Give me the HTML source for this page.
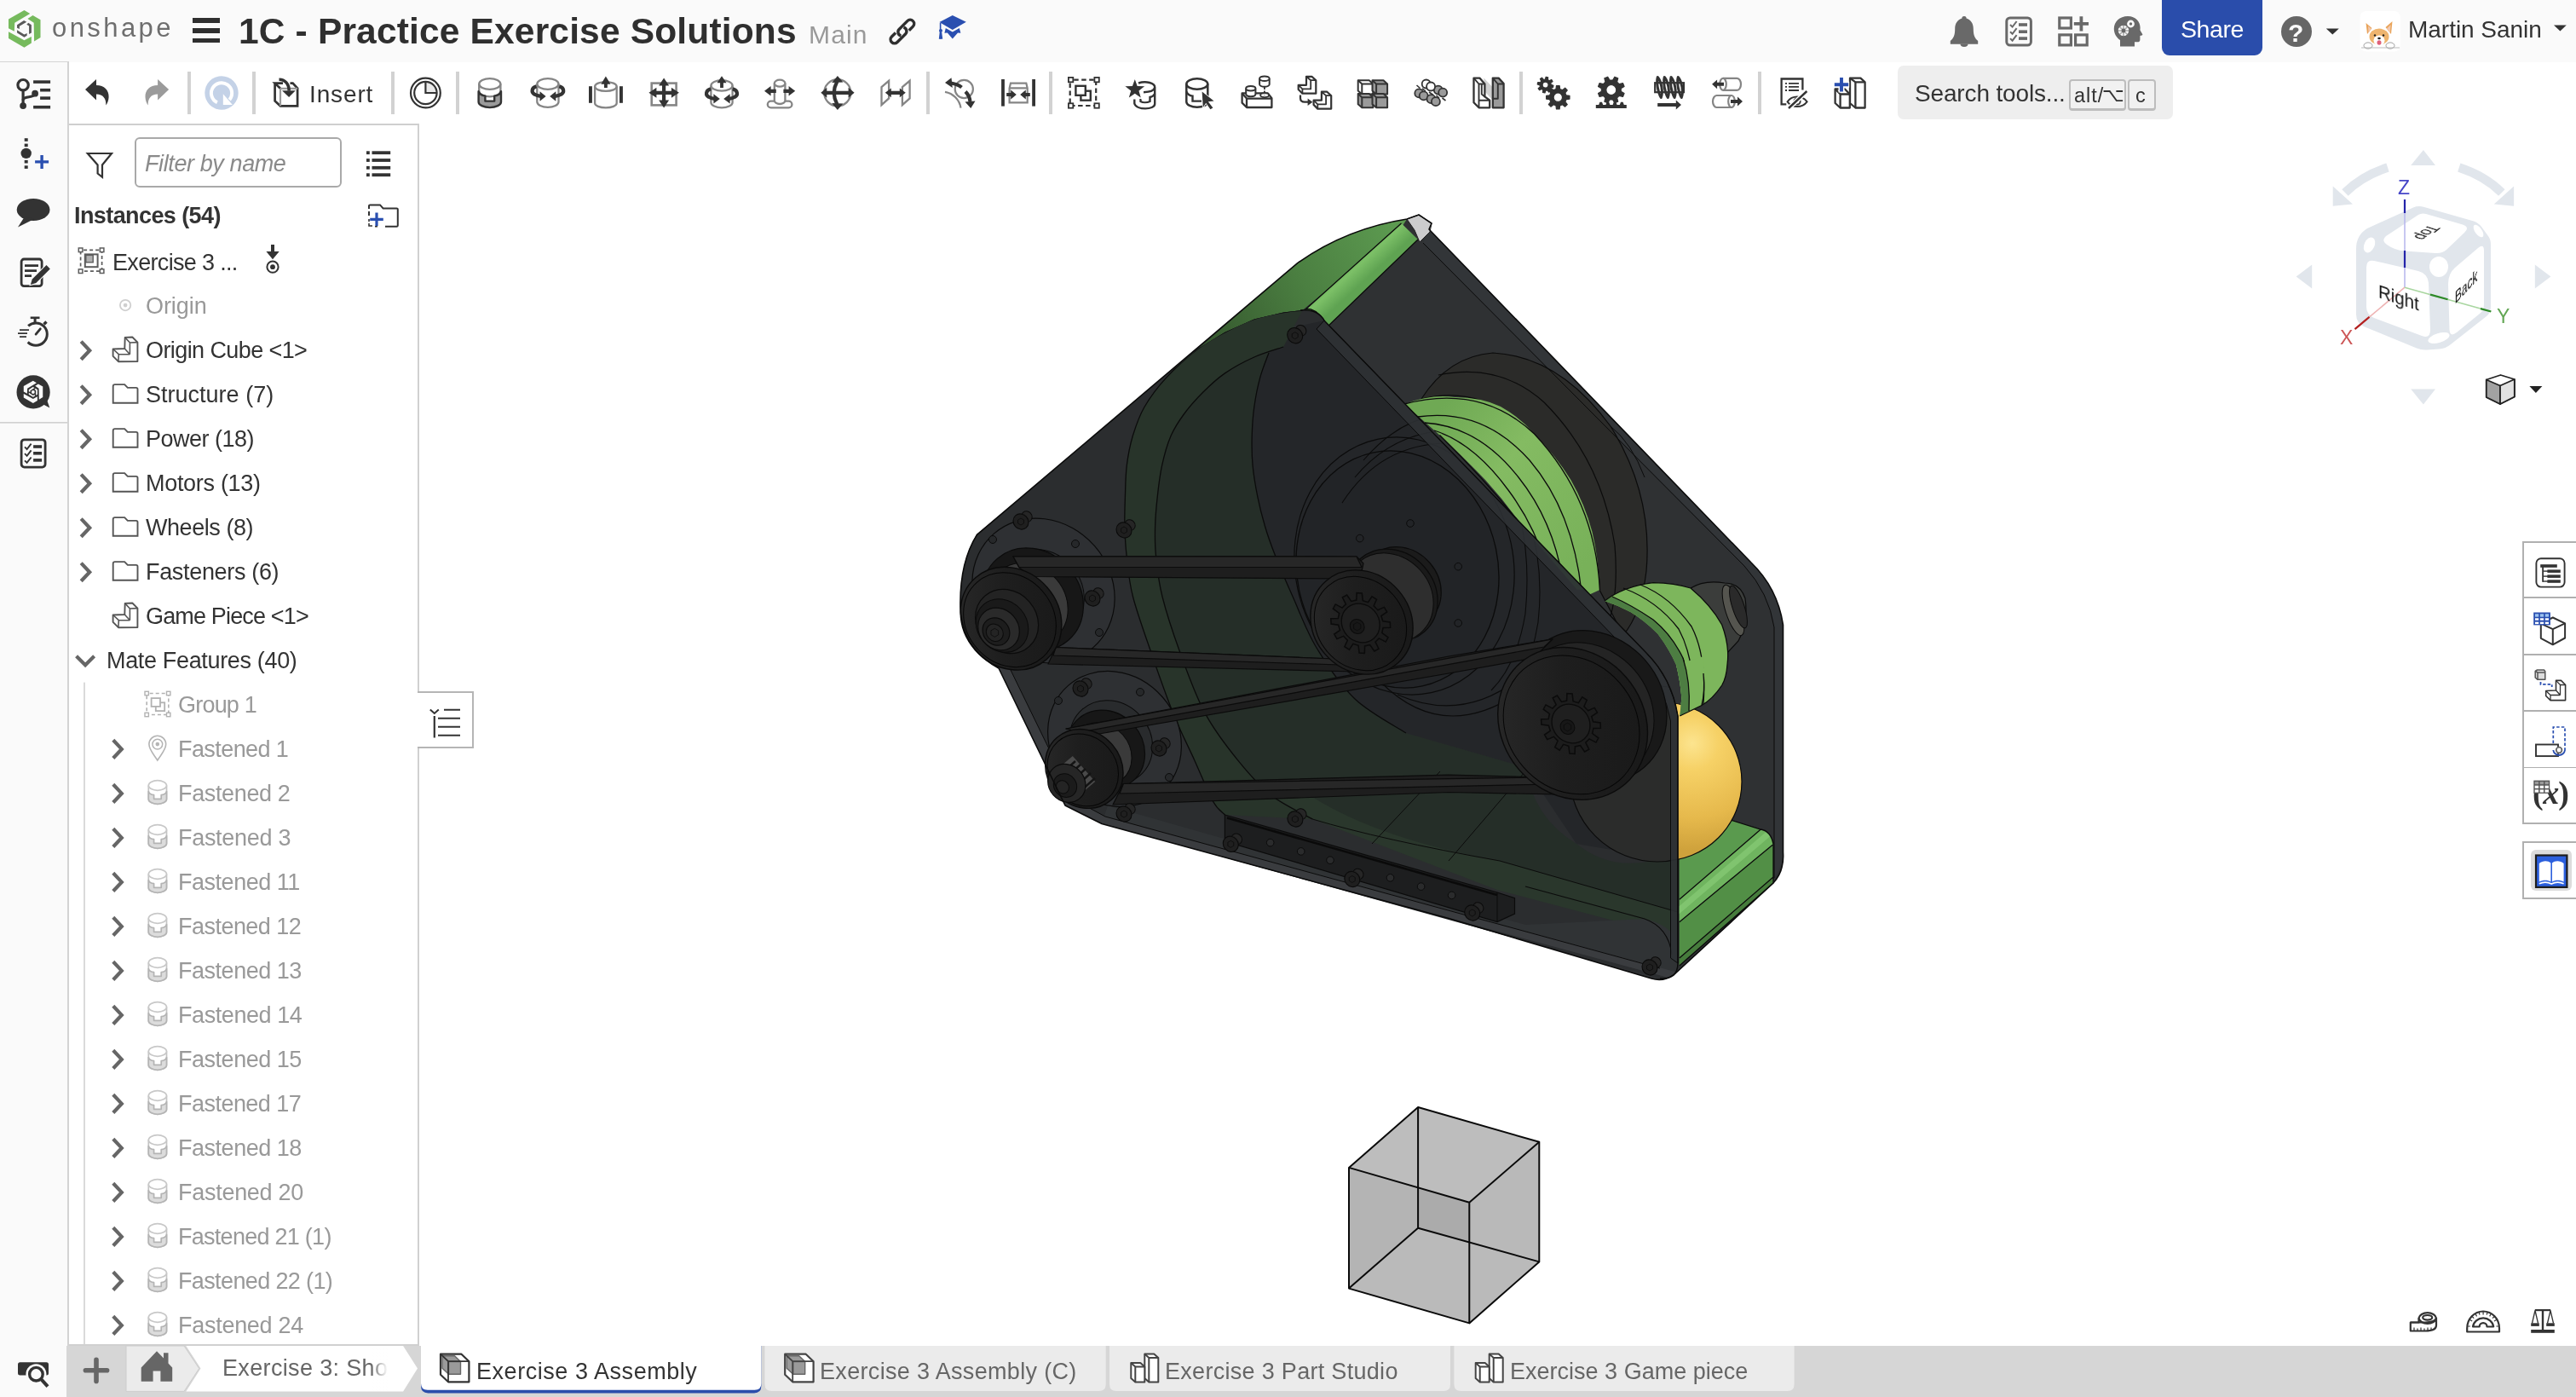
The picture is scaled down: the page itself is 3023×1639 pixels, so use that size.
<!DOCTYPE html>
<html lang="en">
<head>
<meta charset="utf-8">
<title>1C - Practice Exercise Solutions | Exercise 3 Assembly</title>
<style>
*{box-sizing:border-box;margin:0;padding:0}
html,body{width:3023px;height:1639px;overflow:hidden;background:#fff}
body{position:relative;font-family:"Liberation Sans",sans-serif;color:#333;font-size:27px}
.abs{position:absolute}
svg{position:absolute;overflow:visible}
.tx{position:absolute;white-space:nowrap;line-height:1;transform-origin:0 100%;will-change:transform}
#topbar{position:absolute;left:0;top:0;width:3023px;height:73px;background:#fafafa}
#sidebar{position:absolute;left:0;top:72px;width:81px;height:1567px;background:#fafafa;border-top:1px solid #d4d4d4;border-right:2px solid #d3d3d3}
#toolbar{position:absolute;left:81px;top:73px;width:2942px;height:73px;background:#fff}
#panel{position:absolute;left:80.500px;top:144.500px;width:411.500px;height:1434.500px;background:#fff;border-top:2px solid #cfcfcf;border-right:2px solid #d0d0d0;border-bottom:2px solid #d0d0d0}
#bottom{position:absolute;left:78px;top:1579px;width:2945px;height:60px;background:#d6d6d6}
.sep{position:absolute;top:84px;width:4px;height:50px;background:#d2d2d2}
.row{position:absolute;left:0;height:52px;width:408px}
</style>
</head>
<body>

<div id="topbar"></div>
<svg class="abs" style="left:0;top:0" width="60" height="72" viewBox="0 0 60 72">
<g fill="#76ba5d"><polygon points="28.460,12.010 35.270,16.020 17.230,26.850 16.830,36.870 10.010,33.270 10.010,22.440"/><polygon points="38.480,18.030 47.500,23.240 47.500,44.090 40.090,48.500 39.690,26.850 32.470,22.040"/><polygon points="10.010,37.270 28.460,47.300 36.880,42.890 36.880,50.500 28.460,55.720 10.010,44.890"/></g>
<g fill="#595959"><polygon points="28.060,24.040 31.270,25.650 22.850,30.860 22.850,34.070 20.040,32.860 20.040,29.260"/><polygon points="33.270,26.850 36.880,29.260 36.880,38.480 34.070,40.080 34.070,30.460 31.270,28.860"/><polygon points="20.040,35.270 28.460,40.480 31.670,38.880 31.670,41.690 28.460,43.690 20.040,38.480"/></g>
</svg>
<span class="tx" style="left:61.0px;top:17.0px;font-size:31.0px;color:#6e6e6e;letter-spacing:3.43px;">onshape</span>
<div class="abs" style="left:226px;top:21.2px;width:32px;height:5.4px;background:#2f2f2f"></div>
<div class="abs" style="left:226px;top:33.2px;width:32px;height:5.4px;background:#2f2f2f"></div>
<div class="abs" style="left:226px;top:45.1px;width:32px;height:5.4px;background:#2f2f2f"></div>
<span class="tx" style="left:279.7px;top:16.3px;font-size:42.5px;color:#2f2f2f;letter-spacing:0.16px;font-weight:bold;">1C - Practice Exercise Solutions</span>
<span class="tx" style="left:949.0px;top:26.3px;font-size:30.0px;color:#999;letter-spacing:1.16px;">Main</span>
<svg class="abs" style="left:1040px;top:18px" width="40" height="40" viewBox="1040 18 40 40" fill="none" stroke="#2f2f2f" stroke-width="3.400" stroke-linecap="butt">
<g transform="translate(1058.900 37.100) rotate(-45)"><path d="M6.500 4.600 H13 A4.600 4.600 0 0 0 13 -4.600 H-0.500 A4.600 4.600 0 0 0 -4.500 2.400"/><path d="M-6.500 -4.600 H-13 A4.600 4.600 0 0 0 -13 4.600 H0.500 A4.600 4.600 0 0 0 4.500 -2.400"/></g>
</svg>
<svg class="abs" style="left:1095px;top:12px" width="45" height="40" viewBox="1095 12 45 40">
<polygon points="1102.4,26 1117.8,18 1133.8,25.8 1117.8,35" fill="#2a4fb0"/>
<polygon points="1109.8,33 1117.8,37.6 1125.8,33 1127.4,38.8 1124,38.4 1117.8,45.4 1111.8,38.4 1108.4,38.8" fill="#2a4fb0"/>
<path d="M1103.6 27 V45.6" stroke="#2a4fb0" stroke-width="1.6" fill="none"/>
<polygon points="1102.8,38 1105.2,38 1106.2,45.8 1101.8,45.8" fill="#2a4fb0"/>
<circle cx="1104" cy="36" r="2" fill="#2a4fb0"/>
</svg>
<svg class="abs" style="left:2280px;top:10px" width="250" height="55" viewBox="2280 10 250 55">
<g fill="#696969">
<path d="M2305 19 c2 0 2.6 1.2 2.6 2.6 c5.2 1.6 8.2 6 8.2 12.4 c0 7.4 1.6 10.6 5.4 14 v3.8 h-32.4 v-3.8 c3.8 -3.400 5.4 -6.600 5.4 -14 c0 -6.400 3 -10.800 8.200 -12.400 c0 -1.400 0.600 -2.600 2.600 -2.600z"/>
<path d="M2300.500 51.500 h9 a4.500 3.400 0 0 1 -9 0z"/>
</g>
<rect x="2354.800" y="20.900" width="28.600" height="32.200" rx="4" fill="none" stroke="#696969" stroke-width="3"/>
<g fill="#696969"><rect x="2369" y="27.200" width="10" height="3.600"/><rect x="2369" y="35.400" width="10" height="3.600"/><rect x="2369" y="43.300" width="10" height="3.600"/></g>
<g fill="none" stroke="#696969" stroke-width="2"><path d="M2359 29 l2.600 2.600 l5 -6.600"/><path d="M2359 37.200 l2.600 2.600 l5 -6.600"/><path d="M2359 45.100 l2.600 2.600 l5 -6.600"/></g>
<g fill="none" stroke="#696969" stroke-width="3.200"><rect x="2416.800" y="21" width="13.600" height="12"/><rect x="2416.800" y="40.900" width="13.600" height="12"/><rect x="2435.600" y="40.900" width="13.600" height="12"/></g>
<path d="M2442.400 19.200 v17.200 M2433.800 27.800 h17.200" stroke="#696969" stroke-width="3.800" fill="none"/>
<path d="M2497 18.900 c9.500 0 14.600 6.600 14.600 13.600 c0 1.600 -.4 2.400 .2 3.400 l2.400 4 c.4 .8 0 1.400 -1 1.600 l-1.800 .4 v4.600 c0 2 -1.200 2.800 -3.200 2.800 h-3.200 v5.200 h-17 v-7.400 c-4.200 -3 -7.200 -7.600 -7.200 -13.400 c0 -8.400 6.600 -14.800 16.200 -14.800z" fill="#696969"/>
<g fill="#fafafa"><circle cx="2492" cy="36" r="6.200"/><circle cx="2500.500" cy="28" r="4.400"/></g>
<g fill="#696969"><circle cx="2492" cy="36" r="2.400"/><circle cx="2500.500" cy="28" r="1.700"/></g>
<g stroke="#696969" stroke-width="1.600"><path d="M2492 29 v14 M2485 36 h14 M2487 31 l10 10 M2497 31 l-10 10" opacity=".55"/></g>
</svg>
<div class="abs" style="left:2537px;top:-8px;width:118px;height:72.500px;border-radius:9px;background:#2a4dab"></div>
<span class="tx" style="left:2559.1px;top:20.1px;font-size:28.5px;color:#fff;letter-spacing:-0.41px;">Share</span>
<svg class="abs" style="left:2670px;top:10px" width="90" height="55" viewBox="2670 10 90 55">
<circle cx="2695" cy="37" r="18" fill="#666"/>
<polygon points="2729.800,33.500 2744.800,33.500 2737.300,40.600" fill="#333"/>
</svg>
<span class="tx" style="left:2684.6px;top:23.5px;font-size:30.0px;color:#fafafa;font-weight:bold;">?</span>
<svg class="abs" style="left:2765px;top:8px" width="60" height="60" viewBox="2765 8 60 60">
<rect x="2769.600" y="13" width="47.200" height="47.600" rx="7" fill="#fff"/>
<path d="M2778 40 l-1.500 -13 l7 6 z" fill="#e9a45a"/><path d="M2806 40 l1.500 -15 l-8 7 z" fill="#e9a45a"/>
<path d="M2779.500 38.500 l-.5 -8 l4 3.500z" fill="#f3c9b0"/><path d="M2804.800 38.500 l.8 -9.500 l-4.600 4.500z" fill="#f3c9b0"/>
<ellipse cx="2792" cy="43" rx="11.500" ry="9.500" fill="#eeb46e"/>
<ellipse cx="2792" cy="47.500" rx="6.500" ry="6" fill="#fff"/>
<ellipse cx="2792" cy="45" rx="1.800" ry="1.300" fill="#222"/>
<ellipse cx="2792" cy="50" rx="2.500" ry="2.800" fill="#e0607a"/>
<circle cx="2787" cy="41.500" r="1.200" fill="#222"/><circle cx="2797" cy="41.500" r="1.200" fill="#222"/>
<ellipse cx="2779" cy="53.500" rx="5" ry="3.600" fill="#fff" stroke="#888" stroke-width=".8"/><ellipse cx="2805" cy="53.500" rx="5" ry="3.600" fill="#fff" stroke="#888" stroke-width=".8"/>
<path d="M2771 56 h45" stroke="#aaa" stroke-width=".8"/>
</svg>
<span class="tx" style="left:2826.2px;top:20.5px;font-size:28.0px;color:#333;letter-spacing:-0.03px;">Martin Sanin</span>
<svg class="abs" style="left:2990px;top:25px" width="30" height="20" viewBox="2990 25 30 20"><polygon points="2997,29.500 3011.800,29.500 3004.400,36.500" fill="#333"/></svg>
<div id="toolbar"></div>
<div class="sep" style="left:220.2px"></div>
<div class="sep" style="left:296.1px"></div>
<div class="sep" style="left:459.2px"></div>
<div class="sep" style="left:535.0px"></div>
<div class="sep" style="left:1086.6px"></div>
<div class="sep" style="left:1231.3px"></div>
<div class="sep" style="left:1783.2px"></div>
<div class="sep" style="left:2063.2px"></div>
<svg class="abs" style="left:80px;top:73px" width="2943" height="73" viewBox="80 73 2943 73"><path d="M100 105 L113 93 V100 C122.5 100 128 106 127.6 114 C127.400 118 126.2 121 124.300 123.400 C124.800 116 121 110.600 113 110.600 V117.500 Z" fill="#333"/>
<g transform="translate(298.100 0) scale(-1 1)"><path d="M100 105 L113 93 V100 C122.5 100 128 106 127.6 114 C127.400 118 126.2 121 124.300 123.400 C124.800 116 121 110.600 113 110.600 V117.500 Z" fill="#9b9b9b"/></g>
<circle cx="260" cy="109" r="19.700" fill="#c4d2e7"/>
<path d="M254.900 120.300 A12.100 12.100 0 1 1 269.300 117.100" fill="none" stroke="#fff" stroke-width="4"/>
<polygon points="261.800,110.300 261.800,122.900 272.900,122.900" fill="#fff"/>
<g fill="none" stroke="#333" stroke-width="2.700" stroke-linejoin="miter"><path d="M322.600 97.600 V118.400 L329 124.300 H349.100 V103.500 L343.600 97.600 H340.500 M332 97.600 H322.600 L329 103.800" /><path d="M329 103.800 V124.300 M329 103.800 H349.100" stroke="#9a9a9a" stroke-width="2.200"/><path d="M327.500 93.200 C334.500 93.200 339.200 98.500 339.200 106.500" stroke-width="3.600"/></g>
<polygon points="331,106.200 346.800,106.200 339.100,113.900" fill="#333"/>
<path d="M499.400 109 V95.200 A13.800 13.800 0 0 1 513.200 109 Z" fill="#e9e9e9"/>
<g fill="none" stroke="#333" stroke-width="2.200"><circle cx="499.400" cy="109" r="17.400"/><circle cx="499.400" cy="109" r="13.200"/><path d="M499.400 95.800 V109 H512.600"/></g>
<g fill="none" stroke="#858585" stroke-width="2.3"><path d="M562.2 98.5 V107.0 A12.6 6.4 0 0 0 587.4 107.0 V98.5"/><ellipse cx="574.8" cy="98.5" rx="12.6" ry="6.4"/></g>
<path d="M561.600 107.200 C562.400 110 565.500 112.200 569.400 112.600 V118.600 H580.200 V112.600 C584.300 112.200 587.200 110 588 107.200 V119.500 A13.200 6.600 0 0 1 561.600 119.500 Z" fill="#9a9a9a" stroke="#333" stroke-width="2.400" stroke-linejoin="round"/>
<g fill="none" stroke="#858585" stroke-width="2.3"><path d="M630.3 98.5 V119.5 A12.6 6.4 0 0 0 655.5 119.5 V98.5"/><ellipse cx="642.9" cy="98.5" rx="12.6" ry="6.4"/></g>
<g><path d="M629.500 101.300 C623.500 103 623.200 108.500 627.500 110.800 C629.500 112 632 112.500 634.500 112.800" fill="none" stroke="#333" stroke-width="4.200"/><polygon points="633.500,107.200 640.600,112.900 633.500,118.700" fill="#333"/></g>
<g transform="translate(1285.8 0) scale(-1 1)"><path d="M629.500 101.300 C623.500 103 623.200 108.500 627.500 110.800 C629.500 112 632 112.500 634.500 112.800" fill="none" stroke="#333" stroke-width="4.200"/><polygon points="633.500,107.200 640.600,112.900 633.500,118.700" fill="#333"/></g>
<g fill="none" stroke="#858585" stroke-width="2.3"><path d="M698.1 101.5 V121.0 A12.8 5.4 0 0 0 723.7 121.0 V101.5"/><ellipse cx="710.9" cy="101.5" rx="12.8" ry="5.4"/></g>
<rect x="691" y="101.200" width="3.900" height="19.600" fill="#333"/><rect x="727" y="101.200" width="3.900" height="19.600" fill="#333"/>
<polygon points="712.80,103.00 712.80,98.80 716.50,98.80 710.90,89.40 705.30,98.80 709.00,98.80 709.00,103.00" fill="#333"/>
<rect x="764.700" y="97.600" width="28.900" height="25.800" fill="none" stroke="#858585" stroke-width="2.600"/>
<polygon points="761.40,108.80 770.40,114.80 770.40,110.90 787.90,110.90 787.90,114.80 796.90,108.80 787.90,102.80 787.90,106.70 770.40,106.70 770.40,102.80" fill="#333"/>
<polygon points="779.10,91.40 773.10,100.40 777.00,100.40 777.00,117.60 773.10,117.60 779.10,126.60 785.10,117.60 781.20,117.60 781.20,100.40 785.10,100.40" fill="#333"/>
<g fill="none" stroke="#858585" stroke-width="2.3"><path d="M834.4 100.4 V120.2 A12.6 6.2 0 0 0 859.6 120.2 V100.4"/><ellipse cx="847.0" cy="100.4" rx="12.6" ry="6.2"/></g>
<polygon points="848.90,103.00 848.90,97.20 852.60,97.20 847.00,89.20 841.40,97.20 845.10,97.20 845.10,103.00" fill="#333"/>
<g><path d="M834.200 104.300 C828 106 827.600 111.500 831.800 113.800 C833.800 115 836 115.600 838.500 115.900" fill="none" stroke="#333" stroke-width="4.200"/><polygon points="837.400,110.300 844.800,116 837.400,121.600" fill="#333"/></g>
<g transform="translate(1694.0 0) scale(-1 1)"><path d="M834.200 104.300 C828 106 827.600 111.500 831.800 113.800 C833.800 115 836 115.600 838.500 115.900" fill="none" stroke="#333" stroke-width="4.200"/><polygon points="837.400,110.300 844.800,116 837.400,121.600" fill="#333"/></g>
<rect x="900.800" y="118.600" width="28.600" height="7.800" rx="3.900" fill="none" stroke="#858585" stroke-width="2.300"/>
<path d="M908.800 97.700 V118 A6.300 4 0 0 0 921.400 118 V97.700" fill="#fff" stroke="#858585" stroke-width="2.300"/><ellipse cx="915.1" cy="97.700" rx="6.300" ry="4" fill="#fff" stroke="#858585" stroke-width="2.300"/>
<polygon points="910.80,104.70 904.60,104.70 904.60,101.00 897.00,106.80 904.60,112.60 904.60,108.90 910.80,108.90" fill="#333"/>
<polygon points="919.40,108.90 925.60,108.90 925.60,112.60 933.20,106.80 925.60,101.00 925.60,104.70 919.40,104.70" fill="#333"/>
<circle cx="982.8" cy="108.8" r="15.600" fill="none" stroke="#858585" stroke-width="2.300"/>
<polygon points="963.30,108.80 970.30,114.80 970.30,110.90 995.60,110.90 995.60,114.80 1002.60,108.80 995.60,102.80 995.60,106.70 970.30,106.70 970.30,102.80" fill="#333"/>
<path d="M982.400 95.500 C977.800 104 977.800 114 982.400 122.500" fill="none" stroke="#333" stroke-width="4.200"/>
<polygon points="976.200,97 982.900,89 989.400,96.600" fill="#333"/><polygon points="976.200,121 982.900,128.900 989.400,121.400" fill="#333"/>
<g fill="none" stroke="#858585" stroke-width="2.300"><polygon points="1034.500,102.200 1043.100,94.800 1043.100,115.400 1034.500,123.200"/><polygon points="1058.900,102.200 1067.600,94.800 1067.600,115.400 1058.900,123.200"/></g>
<polygon points="1038.80,108.80 1045.80,114.20 1045.80,110.90 1055.80,110.90 1055.80,114.20 1062.80,108.80 1055.80,103.40 1055.80,106.70 1045.80,106.70 1045.80,103.40" fill="#333"/>
<g fill="none" stroke="#858585" stroke-width="2.200"><circle cx="1131.300" cy="104.500" r="10.600"/><path d="M1109 107.800 A22.500 22.500 0 0 1 1127.500 126.700"/></g>
<path d="M1116 97.500 C1122 98.500 1125.500 100 1128.500 102.500 M1133 107.500 C1136.500 111 1138 114.500 1138.500 119" fill="none" stroke="#333" stroke-width="4.200"/>
<polygon points="1109,97 1116.500,91.200 1117.800,103" fill="#333"/><polygon points="1132.500,119.500 1144.500,118.500 1139.300,127" fill="#333"/>
<rect x="1175.100" y="93" width="3.800" height="31.600" fill="#333"/><rect x="1211.200" y="93" width="3.800" height="31.600" fill="#333"/>
<path d="M1184.600 103.400 L1186 97.600 H1204.300 L1205.700 103.400 V120.400 H1184.600 Z M1184.600 103.400 H1205.700" fill="none" stroke="#858585" stroke-width="2.200"/>
<polygon points="1181.20,113.00 1186.20,113.00 1186.20,116.40 1192.80,111.00 1186.20,105.60 1186.20,109.00 1181.20,109.00" fill="#333"/>
<polygon points="1208.80,109.00 1203.80,109.00 1203.80,105.60 1197.20,111.00 1203.80,116.40 1203.80,113.00 1208.80,113.00" fill="#333"/>
<rect x="1255.700" y="93.600" width="30.500" height="30.400" fill="none" stroke="#333" stroke-width="2.200" stroke-dasharray="5.500 3.500" stroke-dashoffset="-4.500"/>
<rect x="1253.9" y="90.9" width="5.400" height="5.400" fill="#fff" stroke="#333" stroke-width="1.800"/>
<rect x="1284.4" y="90.9" width="5.400" height="5.400" fill="#fff" stroke="#333" stroke-width="1.800"/>
<rect x="1253.9" y="121.3" width="5.400" height="5.400" fill="#fff" stroke="#333" stroke-width="1.800"/>
<rect x="1284.4" y="121.3" width="5.400" height="5.400" fill="#fff" stroke="#333" stroke-width="1.800"/>
<rect x="1268.400" y="106.700" width="11.400" height="11" fill="#fff" stroke="#333" stroke-width="2.400"/><rect x="1262.400" y="100.800" width="11.400" height="11" fill="#fff" stroke="#333" stroke-width="2.400"/>
<g fill="none" stroke="#333" stroke-width="2.400"><path d="M1336 97.500 C1345 94.500 1355.500 97.500 1355.200 102.500 V122 C1355.200 129 1333.500 129.500 1331.300 121.500 V116.500"/><path d="M1355.200 102.500 C1354.500 106 1349 108 1342 108.200"/><path d="M1355.200 110 C1354 112.500 1352 113.500 1349.500 114 V119 C1346 120.500 1341 120.500 1338.500 119 V116"/></g>
<polygon points="1331.80,91.30 1335.09,100.37 1344.73,100.70 1337.13,106.63 1339.79,115.90 1331.80,110.50 1323.81,115.90 1326.47,106.63 1318.87,100.70 1328.51,100.37" fill="#333" stroke="#fff" stroke-width="1.200"/>
<g fill="none" stroke="#333" stroke-width="2.5"><path d="M1392.3 98.5 V119.5 A12.5 6.3 0 0 0 1417.3 119.5 V98.5"/><ellipse cx="1404.8" cy="98.5" rx="12.5" ry="6.3"/></g>
<path d="M1392.300 107.500 C1393.500 110.500 1396 112.200 1399.500 112.600 V118.600 H1410" fill="none" stroke="#333" stroke-width="2.400"/>
<polygon points="1410.600,107.600 1424.600,118.400 1417.800,119.200 1423.400,126.400 1420.400,128.200 1415.200,120.800 1411.800,126" fill="#333" stroke="#fff" stroke-width="1.600" paint-order="stroke"/>
<g fill="#fff" stroke="#333" stroke-width="2.300" stroke-linejoin="round"><polygon points="1457.600,109.400 1487.800,109.400 1492.400,115.200 1492.400,126 1463,126 1457.600,120.600"/><path d="M1457.600 109.400 L1463 115.600 H1492.400 M1463 115.600 V126" fill="none"/></g>
<ellipse cx="1484.100" cy="111.600" rx="5" ry="2.500" fill="#fff" stroke="#333" stroke-width="1.800"/>
<g fill="#fff" stroke="#333" stroke-width="2"><path d="M1462.2 103.8 V110.6 A5.6 2.7 0 0 0 1473.4 110.6 V103.8"/><ellipse cx="1467.8" cy="103.8" rx="5.6" ry="2.7"/></g>
<g fill="#fff" stroke="#333" stroke-width="2"><path d="M1478.1 92.2 V99.0 A5.8 2.8 0 0 0 1489.7 99.0 V92.2"/><ellipse cx="1483.9" cy="92.2" rx="5.8" ry="2.8"/></g>
<path d="M1483.900 102 V111.500" stroke="#333" stroke-width="1.800" stroke-dasharray="3 1.500"/>
<g transform="translate(0.0 0.0)" stroke="#333" stroke-width="2.200" stroke-linejoin="round"><polygon points="1533,89.800 1539.400,89.800 1544.300,94.400 1544.300,109.700 1528.400,109.700 1523.700,105 1523.700,99.800 1533,99.800" fill="#fff"/><path d="M1523.700 99.800 L1528.400 104.400 H1538.200 V94.200 L1533 89.800 M1538.200 94.200 H1544.300 M1528.400 104.400 V109.700" fill="none" stroke-width="1.800"/></g>
<g transform="translate(17.9 17.9)" stroke="#333" stroke-width="2.200" stroke-linejoin="round"><polygon points="1533,89.800 1539.400,89.800 1544.300,94.400 1544.300,109.700 1528.400,109.700 1523.700,105 1523.700,99.800 1533,99.800" fill="#fff"/><path d="M1523.700 99.800 L1528.400 104.400 H1538.200 V94.200 L1533 89.800 M1538.200 94.200 H1544.300 M1528.400 104.400 V109.700" fill="none" stroke-width="1.800"/></g>
<path d="M1526 111.500 V115 C1526 118.500 1528 119.700 1531 119.700 H1535" fill="none" stroke="#333" stroke-width="2.200"/><polygon points="1534.600,115.400 1540.400,119.700 1534.600,124" fill="#333"/>
<g stroke="#333" stroke-width="2" stroke-linejoin="round" fill="#fff"><polygon points="1593.7,94.2 1606.7,94.2 1611.3,98.4 1611.3,110.4 1598.3,110.4 1593.7,106.4"/><path d="M1593.7 94.2 L1598.3 98.4 H1611.3 M1598.3 98.4 V110.4" fill="none"/></g>
<g stroke="#333" stroke-width="2" stroke-linejoin="round" fill="#9a9a9a"><polygon points="1610.5,94.2 1623.5,94.2 1628.1,98.4 1628.1,110.4 1615.1,110.4 1610.5,106.4"/><path d="M1610.5 94.2 L1615.1 98.4 H1628.1 M1615.1 98.4 V110.4" fill="none"/></g>
<g stroke="#333" stroke-width="2" stroke-linejoin="round" fill="#9a9a9a"><polygon points="1593.7,110.1 1606.7,110.1 1611.3,114.3 1611.3,126.3 1598.3,126.3 1593.7,122.3"/><path d="M1593.7 110.1 L1598.3 114.3 H1611.3 M1598.3 114.3 V126.3" fill="none"/></g>
<g stroke="#333" stroke-width="2" stroke-linejoin="round" fill="#9a9a9a"><polygon points="1610.5,110.1 1623.5,110.1 1628.1,114.3 1628.1,126.3 1615.1,126.3 1610.5,122.3"/><path d="M1610.5 110.1 L1615.1 114.3 H1628.1 M1615.1 114.3 V126.3" fill="none"/></g>
<g stroke="#333" stroke-width="1.800" fill="#9a9a9a"><circle cx="1665.3" cy="109.4" r="5"/><circle cx="1670.7" cy="112.4" r="5"/></g>
<g stroke="#333" stroke-width="1.800" fill="#9a9a9a"><circle cx="1679.5" cy="116.2" r="5"/><circle cx="1684.9" cy="119.2" r="5"/></g>
<g stroke="#333" stroke-width="1.800" fill="#9a9a9a"><circle cx="1687.8" cy="105.6" r="5"/><circle cx="1693.2" cy="108.6" r="5"/></g>
<g stroke="#333" stroke-width="1.800" fill="#fff"><circle cx="1673.7" cy="98.5" r="5"/><circle cx="1679.1" cy="101.5" r="5"/></g>
<path d="M1662.500 100 L1666.500 103.500 M1669 103.800 L1673 107 M1677 108 L1682 111.500 M1685.500 112 L1689 115 M1692.500 115 L1696.500 118" stroke="#333" stroke-width="1.600" fill="none"/>
<polygon points="1741.300,91.400 1751.100,101.700 1751.100,117 1741.300,106" fill="#d0d0d0"/>
<g stroke="#333" stroke-width="2.300" stroke-linejoin="round"><polygon points="1729.500,91.600 1736.400,91.600 1742.400,98.500 1742.400,113.400 1748.200,117.700 1748.200,126.300 1735.500,126.300 1729.500,120.200" fill="#fff"/><path d="M1729.500 91.600 L1735.500 98.500 H1742.400 M1735.500 98.500 V126.300 M1735.500 117.700 H1748.200 M1742.400 113.400 L1738.800 110.600 V98.500" fill="none" stroke-width="1.900"/></g>
<g stroke="#333" stroke-width="2.300" stroke-linejoin="round"><polygon points="1751.800,91.600 1758.700,91.600 1764.600,98 1764.600,126.300 1751.800,126.300 1751.800,115.500 1751.800,91.600" fill="#9a9a9a"/><path d="M1751.800 91.600 L1757.800 98.500 H1764.600 M1757.800 98.500 V115.800 H1751.800" fill="none" stroke-width="1.900"/></g>
<path fill-rule="evenodd" fill="#333" d="M1820.20,99.36 L1822.98,100.22 L1822.48,102.68 L1819.58,102.39 L1818.43,104.10 L1819.79,106.67 L1817.70,108.06 L1815.86,105.80 L1813.84,106.20 L1812.98,108.98 L1810.52,108.48 L1810.81,105.58 L1809.10,104.43 L1806.53,105.79 L1805.14,103.70 L1807.40,101.86 L1807.00,99.84 L1804.22,98.98 L1804.72,96.52 L1807.62,96.81 L1808.77,95.10 L1807.41,92.53 L1809.50,91.14 L1811.34,93.40 L1813.36,93.00 L1814.22,90.22 L1816.68,90.72 L1816.39,93.62 L1818.10,94.77 L1820.67,93.41 L1822.06,95.50 L1819.80,97.34 Z M1810.10 99.60 a3.50 3.50 0 1 0 7.00 0 a3.50 3.50 0 1 0 -7.00 0Z" stroke="#333" stroke-width="1.2" stroke-linejoin="round"/>
<path fill-rule="evenodd" fill="#333" d="M1838.02,111.87 L1841.98,112.36 L1841.98,116.04 L1838.02,116.53 L1836.83,119.42 L1839.27,122.57 L1836.67,125.17 L1833.52,122.73 L1830.63,123.92 L1830.14,127.88 L1826.46,127.88 L1825.97,123.92 L1823.08,122.73 L1819.93,125.17 L1817.33,122.57 L1819.77,119.42 L1818.58,116.53 L1814.62,116.04 L1814.62,112.36 L1818.58,111.87 L1819.77,108.98 L1817.33,105.83 L1819.93,103.23 L1823.08,105.67 L1825.97,104.48 L1826.46,100.52 L1830.14,100.52 L1830.63,104.48 L1833.52,105.67 L1836.67,103.23 L1839.27,105.83 L1836.83,108.98 Z M1823.10 114.20 a5.20 5.20 0 1 0 10.40 0 a5.20 5.20 0 1 0 -10.40 0Z" stroke="#333" stroke-width="1.2" stroke-linejoin="round"/>
<path fill-rule="evenodd" fill="#333" d="M1902.26,107.31 L1906.07,109.55 L1904.46,113.44 L1900.18,112.32 L1897.62,114.88 L1898.74,119.16 L1894.85,120.77 L1892.61,116.96 L1888.99,116.96 L1886.75,120.77 L1882.86,119.16 L1883.98,114.88 L1881.42,112.32 L1877.14,113.44 L1875.53,109.55 L1879.34,107.31 L1879.34,103.69 L1875.53,101.45 L1877.14,97.56 L1881.42,98.68 L1883.98,96.12 L1882.86,91.84 L1886.75,90.23 L1888.99,94.04 L1892.61,94.04 L1894.85,90.23 L1898.74,91.84 L1897.62,96.12 L1900.18,98.68 L1904.46,97.56 L1906.07,101.45 L1902.26,103.69 Z M1884.80 105.50 a6.00 6.00 0 1 0 12.00 0 a6.00 6.00 0 1 0 -12.00 0Z" stroke="#333" stroke-width="1.2" stroke-linejoin="round"/>
<path d="M1872.800 127 V123 H1876.200 L1877.400 119.800 H1880 L1881.200 123 H1884.400 L1885.600 119.800 H1888.200 L1889.400 123 H1892.600 L1893.800 119.800 H1896.400 L1897.600 123 H1900.800 L1902 119.800 H1904.600 L1905.800 123 H1908.800 V127 Z" fill="#333"/>
<rect x="1942.200" y="97.200" width="33.800" height="11" fill="#fff" stroke="#333" stroke-width="2.200"/>
<path d="M1945.3 90.500 C1943.8 96 1945.3 108 1949.3 114.500 C1951.8 108 1949.8 96 1945.3 90.500 Z" fill="none" stroke="#333" stroke-width="3" stroke-linejoin="round"/>
<path d="M1953.3 90.500 C1951.8 96 1953.3 108 1957.3 114.500 C1959.8 108 1957.8 96 1953.3 90.500 Z" fill="none" stroke="#333" stroke-width="3" stroke-linejoin="round"/>
<path d="M1961.1 90.500 C1959.6 96 1961.1 108 1965.1 114.500 C1967.6 108 1965.6 96 1961.1 90.500 Z" fill="none" stroke="#333" stroke-width="3" stroke-linejoin="round"/>
<path d="M1969.3 90.500 C1967.8 96 1969.3 108 1973.3 114.500 C1975.8 108 1973.8 96 1969.3 90.500 Z" fill="none" stroke="#333" stroke-width="3" stroke-linejoin="round"/>
<polygon points="1945.20,124.90 1966.80,124.90 1966.80,128.40 1973.00,123.00 1966.80,117.60 1966.80,121.10 1945.20,121.10" fill="#333"/>
<g fill="#fff" stroke="#858585" stroke-width="2.200"><path d="M2022 91.800 H2038.500 A4.500 7 0 0 1 2038.500 105.800 H2022"/><ellipse cx="2022" cy="98.800" rx="3.800" ry="7"/><path d="M2032 112 H2014.500 A4.500 7 0 0 0 2014.500 126 H2032"/><ellipse cx="2032" cy="119" rx="3.800" ry="7"/></g>
<polygon points="2023.00,96.80 2015.10,96.80 2015.10,93.40 2009.10,98.80 2015.10,104.20 2015.10,100.80 2023.00,100.80" fill="#333"/>
<polygon points="2031.00,121.00 2039.00,121.00 2039.00,124.40 2045.00,119.00 2039.00,113.60 2039.00,117.00 2031.00,117.00" fill="#333"/>
<g fill="none" stroke="#333" stroke-width="2.300"><path d="M2096.300 122.300 H2090.600 V92.500 H2115.400 V105.500"/><path d="M2099 97.800 H2111 M2099 101.800 H2111 M2099 106 H2111" stroke-width="1.800"/><path d="M2095 97.800 H2097 M2095 101.800 H2097 M2095 106 H2097" stroke-width="1.800"/><path d="M2097.600 119.400 C2103 111.500 2115 111.500 2120.600 119.400 C2115 127 2103 127 2097.600 119.400 Z" stroke-width="2"/><circle cx="2109" cy="119" r="3.600" stroke-width="2"/></g>
<path d="M2099.600 126.600 L2120.200 107.200" stroke="#fff" stroke-width="5.500"/><path d="M2099 127 L2120.400 107" stroke="#333" stroke-width="2.400"/>
<g fill="#fff" stroke="#333" stroke-width="2.300" stroke-linejoin="round"><polygon points="2171,91.600 2183.400,91.600 2188.600,96.400 2188.600,126.500 2177.400,126.500 2171,121"/><path d="M2171 91.600 L2177.400 96.400 H2188.600 M2177.400 96.400 V126.500" fill="none"/><polygon points="2153.600,104.500 2153.600,121 2159.600,126.500 2170.800,126.500 2170.800,110.500 2165,104.500"/><path d="M2153.600 104.500 L2159.600 110.500 H2170.800 M2159.600 110.500 V126.500" fill="none"/></g>
<path d="M2161 90 V108.400 M2151.800 99.200 H2170.200" stroke="#fff" stroke-width="7"/><path d="M2161 91 V107.400 M2152.800 99.200 H2169.200" stroke="#2a4fb0" stroke-width="3.900"/></svg>
<span class="tx" style="left:363.2px;top:97.2px;font-size:28.0px;color:#333;letter-spacing:0.87px;">Insert</span>
<div class="abs" style="left:2226.700px;top:77px;width:323px;height:63.400px;border-radius:7px;background:#eeeeee"></div>
<span class="tx" style="left:2246.7px;top:96.2px;font-size:28.0px;color:#333;letter-spacing:-0.15px;">Search tools...</span>
<div class="abs" style="left:2428.300px;top:92.500px;width:67px;height:37.500px;border:2px solid #bdbdbd;border-bottom-width:3.500px;border-radius:4px;background:#f1f1f1"></div>
<div class="abs" style="left:2497px;top:92.500px;width:33px;height:37.500px;border:2px solid #bdbdbd;border-bottom-width:3.500px;border-radius:4px;background:#f1f1f1"></div>
<span class="tx" style="left:2433.5px;top:101.2px;font-size:23.5px;color:#333;letter-spacing:0.94px;">alt/</span>
<span class="tx" style="left:2466.500px;top:99.500px;font-size:22.500px;color:#333;font-family:'DejaVu Sans','Liberation Sans',sans-serif">⌥</span>
<span class="tx" style="left:2506.0px;top:101.2px;font-size:23.5px;color:#333;">c</span>

<div id="sidebar"></div>
<svg class="abs" style="left:0;top:0" width="80" height="1639" viewBox="0 0 80 1639"><g fill="none" stroke="#333" stroke-width="3.2"><circle cx="27.1" cy="99.7" r="6.2"/><path d="M27.1 106 V122"/><path d="M27.1 117.500 C27.1 112.500 40 115 40.800 110.500"/></g>
<circle cx="27.1" cy="124.100" r="3.900" fill="#333"/><circle cx="41.100" cy="109.700" r="3.900" fill="#333"/>
<rect x="39.1" y="94.3" width="20.0" height="3.600" fill="#333"/>
<rect x="47.1" y="103.9" width="12.0" height="3.600" fill="#333"/>
<rect x="47.1" y="113.3" width="12.0" height="3.600" fill="#333"/>
<rect x="39.1" y="123.9" width="20.0" height="3.600" fill="#333"/>
<rect x="28.700" y="162.2" width="4" height="3.600" fill="#333"/>
<rect x="28.700" y="168.6" width="4" height="3.600" fill="#333"/>
<rect x="28.700" y="187.9" width="4" height="3.600" fill="#333"/>
<rect x="28.700" y="194.3" width="4" height="3.600" fill="#333"/>
<circle cx="30.700" cy="179.900" r="6.200" fill="#333"/>
<path d="M49.100 181.900 V197.900 M41.100 189.900 H57.100" stroke="#2a4fb0" stroke-width="3.400"/>
<ellipse cx="39.100" cy="246" rx="19.400" ry="13" fill="#333"/><polygon points="29,254 21,266.600 40,257" fill="#333"/>
<rect x="25.100" y="304" width="24" height="31.600" rx="3" fill="none" stroke="#333" stroke-width="2.800"/>
<path d="M29 311.600 H45 M29 317.600 H43 M29 323.600 H37" stroke="#333" stroke-width="2.600"/>
<path d="M54.500 311 L37.800 327.500 L35.800 334 L42.300 332 L58.800 315.500 Z" fill="#333" stroke="#fafafa" stroke-width="2" paint-order="stroke"/>
<g fill="none" stroke="#333"><circle cx="42.100" cy="392.100" r="13.200" stroke-width="3" stroke-dasharray="62 21" stroke-dashoffset="-52"/><path d="M35.700 372.800 H46.500" stroke-width="2.600"/><path d="M41.100 373 V379" stroke-width="3"/><path d="M51.500 380.500 L54.500 377.500" stroke-width="3.400"/><path d="M42.100 392.100 L47.300 385.800" stroke-width="2.800" stroke-linecap="round"/><path d="M23 387.100 H34 M21 391.100 H32 M23 395.100 H31" stroke-width="1.800"/></g>
<circle cx="39.100" cy="459.900" r="19.600" fill="#333"/><polygon points="48,473 58.300,478.500 54,466" fill="#333"/>
<g transform="translate(39.100 459.900) scale(0.600) translate(-28.900 -33.800)" fill="#fafafa"><polygon points="28.460,12.010 35.270,16.020 17.230,26.850 16.830,36.870 10.010,33.270 10.010,22.440"/><polygon points="38.480,18.030 47.500,23.240 47.500,44.090 40.090,48.500 39.690,26.850 32.470,22.040"/><polygon points="10.010,37.270 28.460,47.300 36.880,42.890 36.880,50.500 28.460,55.720 10.010,44.890"/><polygon points="28.060,24.040 31.270,25.650 22.850,30.860 22.850,34.070 20.040,32.860 20.040,29.260"/><polygon points="33.270,26.850 36.880,29.260 36.880,38.480 34.070,40.080 34.070,30.460 31.270,28.860"/><polygon points="20.040,35.270 28.460,40.480 31.670,38.880 31.670,41.690 28.460,43.690 20.040,38.480"/><circle cx="28.500" cy="34" r="3.200"/></g>
<rect x="0" y="495" width="79" height="1.600" fill="#d0d0d0"/>
<rect x="25.100" y="515.800" width="28" height="32.300" rx="3.500" fill="none" stroke="#333" stroke-width="2.800"/>
<rect x="39.100" y="522.2" width="10" height="3.600" fill="#333"/><path d="M29 524.4 l2.600 2.600 l5 -6.400" fill="none" stroke="#333" stroke-width="1.900"/>
<rect x="39.100" y="530.0" width="10" height="3.600" fill="#333"/><path d="M29 532.2 l2.600 2.600 l5 -6.400" fill="none" stroke="#333" stroke-width="1.900"/>
<rect x="39.100" y="538.1" width="10" height="3.600" fill="#333"/><path d="M29 540.3 l2.600 2.600 l5 -6.400" fill="none" stroke="#333" stroke-width="1.900"/>
<rect x="21" y="1598.200" width="36" height="15.300" rx="2.500" fill="#333"/>
<circle cx="42.400" cy="1612.200" r="12" fill="#fafafa"/><circle cx="42.400" cy="1612.200" r="7.800" fill="#fafafa" stroke="#333" stroke-width="3.400"/><path d="M48.300 1618.200 L56 1626.600" stroke="#333" stroke-width="4"/></svg>
<div id="panel"></div>
<svg class="abs" style="left:80px;top:146px" width="412" height="1433" viewBox="80 146 412 1433"><path d="M102.800 180 H131 L120 193.500 V207.800 L114.600 203.500 V193.500 Z" fill="none" stroke="#333" stroke-width="2.200" stroke-linejoin="miter"/>
<rect x="430" y="177.3" width="3.800" height="3.800" fill="#333"/><rect x="436.500" y="177.3" width="21.700" height="3.800" fill="#333"/>
<rect x="430" y="186.1" width="3.800" height="3.800" fill="#333"/><rect x="436.500" y="186.1" width="21.700" height="3.800" fill="#333"/>
<rect x="430" y="194.9" width="3.800" height="3.800" fill="#333"/><rect x="436.500" y="194.9" width="21.700" height="3.800" fill="#333"/>
<rect x="430" y="203.3" width="3.800" height="3.800" fill="#333"/><rect x="436.500" y="203.3" width="21.700" height="3.800" fill="#333"/>
<path d="M433 253 V248 M433 245 V241.500 Q433 240.400 434.200 240.400 H446 L449.600 244.400 H465.500 Q466.800 244.400 466.800 245.600 V264.500 Q466.800 265.800 465.500 265.800 H452" fill="none" stroke="#333" stroke-width="2"/>
<path d="M433 257 V260 M433 262 V265 H437 M440 265.800 H443" fill="none" stroke="#333" stroke-width="1.600"/>
<path d="M442 249.500 V265 M434.200 257.300 H449.800" stroke="#2a4fb0" stroke-width="3.200"/>
<rect x="94.600" y="293.400" width="25" height="24.800" fill="none" stroke="#5c5c5c" stroke-width="1.700" stroke-dasharray="4 3" stroke-dashoffset="-3.500"/>
<rect x="92.3" y="291.0" width="4.600" height="4.600" fill="#fff" stroke="#5c5c5c" stroke-width="1.500"/>
<rect x="117.3" y="291.0" width="4.600" height="4.600" fill="#fff" stroke="#5c5c5c" stroke-width="1.500"/>
<rect x="92.3" y="315.9" width="4.600" height="4.600" fill="#fff" stroke="#5c5c5c" stroke-width="1.500"/>
<rect x="117.3" y="315.9" width="4.600" height="4.600" fill="#fff" stroke="#5c5c5c" stroke-width="1.500"/>
<rect x="99.800" y="298.400" width="14.800" height="14.800" fill="#fff" stroke="#5c5c5c" stroke-width="2"/><rect x="100.800" y="299.400" width="8.400" height="8.400" fill="#b0b0b0" stroke="#5c5c5c" stroke-width="1.400"/>
<polygon points="318,287.100 322,287.100 322,295 327.700,295 320,304.200 312.400,295 318,295" fill="#333"/>
<circle cx="320" cy="313.200" r="6.600" fill="none" stroke="#333" stroke-width="2"/><circle cx="320" cy="313.200" r="2.900" fill="#333"/>
<circle cx="147.100" cy="358.100" r="6.200" fill="none" stroke="#cfcfcf" stroke-width="1.800"/><circle cx="147.100" cy="358.100" r="2.400" fill="#cfcfcf"/>
<path d="M95.2 400.6 L105.2 411.2 L95.2 421.8" fill="none" stroke="#666" stroke-width="4.200" stroke-linecap="butt" stroke-linejoin="miter"/>
<g transform="translate(0 0.0)" fill="none" stroke="#555" stroke-width="1.900" stroke-linejoin="round"><polygon points="146.700,395.900 155.300,395.500 161.400,401.600 161.400,424 138.900,424.200 132.600,417.800 132.600,409.500 146.300,409" fill="#fff"/><path d="M146.700 395.900 L152.400 402 L161.400 401.600 M152.400 402 V415.700 M132.600 409.500 L139.300 415.700 H152.400 M139.300 415.700 L138.900 424.200 M146.300 409 L152.400 415.700" stroke-width="1.600"/></g>
<path d="M95.2 452.6 L105.2 463.2 L95.2 473.8" fill="none" stroke="#666" stroke-width="4.200" stroke-linecap="butt" stroke-linejoin="miter"/>
<path transform="translate(0 0.0)" d="M132.700 472.700 V453.200 Q132.700 451.100 134.800 451.100 H146.200 L149.800 454.900 H159.700 Q161.500 454.900 161.500 456.700 V472.700 Z" fill="none" stroke="#555" stroke-width="1.900"/>
<path d="M95.2 504.6 L105.2 515.2 L95.2 525.8" fill="none" stroke="#666" stroke-width="4.200" stroke-linecap="butt" stroke-linejoin="miter"/>
<path transform="translate(0 52.0)" d="M132.700 472.700 V453.200 Q132.700 451.100 134.800 451.100 H146.200 L149.800 454.900 H159.700 Q161.500 454.900 161.500 456.700 V472.700 Z" fill="none" stroke="#555" stroke-width="1.900"/>
<path d="M95.2 556.6 L105.2 567.2 L95.2 577.8" fill="none" stroke="#666" stroke-width="4.200" stroke-linecap="butt" stroke-linejoin="miter"/>
<path transform="translate(0 104.0)" d="M132.700 472.700 V453.200 Q132.700 451.100 134.800 451.100 H146.200 L149.800 454.900 H159.700 Q161.500 454.900 161.500 456.700 V472.700 Z" fill="none" stroke="#555" stroke-width="1.900"/>
<path d="M95.2 608.6 L105.2 619.2 L95.2 629.8" fill="none" stroke="#666" stroke-width="4.200" stroke-linecap="butt" stroke-linejoin="miter"/>
<path transform="translate(0 156.0)" d="M132.700 472.700 V453.200 Q132.700 451.100 134.800 451.100 H146.200 L149.800 454.900 H159.700 Q161.500 454.900 161.500 456.700 V472.700 Z" fill="none" stroke="#555" stroke-width="1.900"/>
<path d="M95.2 660.6 L105.2 671.2 L95.2 681.8" fill="none" stroke="#666" stroke-width="4.200" stroke-linecap="butt" stroke-linejoin="miter"/>
<path transform="translate(0 208.0)" d="M132.700 472.700 V453.200 Q132.700 451.100 134.800 451.100 H146.200 L149.800 454.900 H159.700 Q161.500 454.900 161.500 456.700 V472.700 Z" fill="none" stroke="#555" stroke-width="1.900"/>
<g transform="translate(0 312.0)" fill="none" stroke="#555" stroke-width="1.900" stroke-linejoin="round"><polygon points="146.700,395.900 155.300,395.500 161.400,401.600 161.400,424 138.900,424.200 132.600,417.800 132.600,409.500 146.300,409" fill="#fff"/><path d="M146.700 395.900 L152.400 402 L161.400 401.600 M152.400 402 V415.700 M132.600 409.500 L139.300 415.700 H152.400 M139.300 415.700 L138.900 424.200 M146.300 409 L152.400 415.700" stroke-width="1.600"/></g>
<path d="M89.600 769.800 L100.100 780.300 L110.600 769.800" fill="none" stroke="#666" stroke-width="4.200"/>
<rect x="98.200" y="800.600" width="1.600" height="778" fill="#d2d2d2"/>
<rect x="172.200" y="813.500" width="25.600" height="25" fill="none" stroke="#b2b2b2" stroke-width="1.600" stroke-dasharray="4 3" stroke-dashoffset="-3.500"/>
<rect x="170.0" y="811.3" width="4.400" height="4.400" fill="#fff" stroke="#b2b2b2" stroke-width="1.400"/>
<rect x="195.5" y="811.3" width="4.400" height="4.400" fill="#fff" stroke="#b2b2b2" stroke-width="1.400"/>
<rect x="170.0" y="836.3" width="4.400" height="4.400" fill="#fff" stroke="#b2b2b2" stroke-width="1.400"/>
<rect x="195.5" y="836.3" width="4.400" height="4.400" fill="#fff" stroke="#b2b2b2" stroke-width="1.400"/>
<rect x="182.800" y="824.300" width="10.400" height="9.800" fill="#fff" stroke="#b2b2b2" stroke-width="1.800"/><rect x="177.600" y="819.100" width="10.400" height="9.800" fill="#fff" stroke="#b2b2b2" stroke-width="1.800"/>
<path d="M184.800 892 C180 884.500 174.900 879.500 174.900 873.100 A9.900 9.900 0 0 1 194.700 873.100 C194.700 879.500 189.600 884.500 184.800 892 Z" fill="#fff" stroke="#b4b4b4" stroke-width="1.600"/><circle cx="184.800" cy="873.100" r="5.900" fill="none" stroke="#b4b4b4" stroke-width="1.500"/><circle cx="184.800" cy="873.100" r="2.300" fill="#b4b4b4"/>
<path d="M132.8 868.3 L142.8 878.9 L132.8 889.5" fill="none" stroke="#666" stroke-width="4.200" stroke-linecap="butt" stroke-linejoin="miter"/>
<path d="M132.8 920.3 L142.8 930.9 L132.8 941.5" fill="none" stroke="#666" stroke-width="4.200" stroke-linecap="butt" stroke-linejoin="miter"/>
<g transform="translate(0 0.0)"><path d="M174.300 921.500 V937.500 A10.600 5.800 0 0 0 195.500 937.500 V921.500" fill="#fff" stroke="#c4c4c4" stroke-width="1.700"/><path d="M174.300 928.500 C175 930.800 177.500 932.400 180.600 932.700 V937.300 H189.200 V932.700 C192.300 932.400 194.800 930.800 195.500 928.500 V937.500 A10.600 5.800 0 0 1 174.300 937.500 Z" fill="#dcdcdc" stroke="#b4b4b4" stroke-width="1.700" stroke-linejoin="round"/><ellipse cx="184.900" cy="921.500" rx="10.600" ry="5.800" fill="#fff" stroke="#c8c8c8" stroke-width="1.700"/></g>
<path d="M132.8 972.3 L142.8 982.9 L132.8 993.5" fill="none" stroke="#666" stroke-width="4.200" stroke-linecap="butt" stroke-linejoin="miter"/>
<g transform="translate(0 52.0)"><path d="M174.300 921.500 V937.500 A10.600 5.800 0 0 0 195.500 937.500 V921.500" fill="#fff" stroke="#c4c4c4" stroke-width="1.700"/><path d="M174.300 928.500 C175 930.800 177.500 932.400 180.600 932.700 V937.300 H189.200 V932.700 C192.300 932.400 194.800 930.800 195.500 928.500 V937.500 A10.600 5.800 0 0 1 174.300 937.500 Z" fill="#dcdcdc" stroke="#b4b4b4" stroke-width="1.700" stroke-linejoin="round"/><ellipse cx="184.900" cy="921.500" rx="10.600" ry="5.800" fill="#fff" stroke="#c8c8c8" stroke-width="1.700"/></g>
<path d="M132.8 1024.3 L142.8 1034.9 L132.8 1045.5" fill="none" stroke="#666" stroke-width="4.200" stroke-linecap="butt" stroke-linejoin="miter"/>
<g transform="translate(0 104.0)"><path d="M174.300 921.500 V937.500 A10.600 5.800 0 0 0 195.500 937.500 V921.500" fill="#fff" stroke="#c4c4c4" stroke-width="1.700"/><path d="M174.300 928.500 C175 930.800 177.500 932.400 180.600 932.700 V937.300 H189.200 V932.700 C192.300 932.400 194.800 930.800 195.500 928.500 V937.500 A10.600 5.800 0 0 1 174.300 937.500 Z" fill="#dcdcdc" stroke="#b4b4b4" stroke-width="1.700" stroke-linejoin="round"/><ellipse cx="184.900" cy="921.500" rx="10.600" ry="5.800" fill="#fff" stroke="#c8c8c8" stroke-width="1.700"/></g>
<path d="M132.8 1076.3 L142.8 1086.9 L132.8 1097.5" fill="none" stroke="#666" stroke-width="4.200" stroke-linecap="butt" stroke-linejoin="miter"/>
<g transform="translate(0 156.0)"><path d="M174.300 921.500 V937.500 A10.600 5.800 0 0 0 195.500 937.500 V921.500" fill="#fff" stroke="#c4c4c4" stroke-width="1.700"/><path d="M174.300 928.500 C175 930.800 177.500 932.400 180.600 932.700 V937.300 H189.200 V932.700 C192.300 932.400 194.800 930.800 195.500 928.500 V937.500 A10.600 5.800 0 0 1 174.300 937.500 Z" fill="#dcdcdc" stroke="#b4b4b4" stroke-width="1.700" stroke-linejoin="round"/><ellipse cx="184.900" cy="921.500" rx="10.600" ry="5.800" fill="#fff" stroke="#c8c8c8" stroke-width="1.700"/></g>
<path d="M132.8 1128.3 L142.8 1138.9 L132.8 1149.5" fill="none" stroke="#666" stroke-width="4.200" stroke-linecap="butt" stroke-linejoin="miter"/>
<g transform="translate(0 208.0)"><path d="M174.300 921.500 V937.500 A10.600 5.800 0 0 0 195.500 937.500 V921.500" fill="#fff" stroke="#c4c4c4" stroke-width="1.700"/><path d="M174.300 928.500 C175 930.800 177.500 932.400 180.600 932.700 V937.300 H189.200 V932.700 C192.300 932.400 194.800 930.800 195.500 928.500 V937.500 A10.600 5.800 0 0 1 174.300 937.500 Z" fill="#dcdcdc" stroke="#b4b4b4" stroke-width="1.700" stroke-linejoin="round"/><ellipse cx="184.900" cy="921.500" rx="10.600" ry="5.800" fill="#fff" stroke="#c8c8c8" stroke-width="1.700"/></g>
<path d="M132.8 1180.3 L142.8 1190.9 L132.8 1201.5" fill="none" stroke="#666" stroke-width="4.200" stroke-linecap="butt" stroke-linejoin="miter"/>
<g transform="translate(0 260.0)"><path d="M174.300 921.500 V937.500 A10.600 5.800 0 0 0 195.500 937.500 V921.500" fill="#fff" stroke="#c4c4c4" stroke-width="1.700"/><path d="M174.300 928.500 C175 930.800 177.500 932.400 180.600 932.700 V937.300 H189.200 V932.700 C192.300 932.400 194.800 930.800 195.500 928.500 V937.500 A10.600 5.800 0 0 1 174.300 937.500 Z" fill="#dcdcdc" stroke="#b4b4b4" stroke-width="1.700" stroke-linejoin="round"/><ellipse cx="184.900" cy="921.500" rx="10.600" ry="5.800" fill="#fff" stroke="#c8c8c8" stroke-width="1.700"/></g>
<path d="M132.8 1232.3 L142.8 1242.9 L132.8 1253.5" fill="none" stroke="#666" stroke-width="4.200" stroke-linecap="butt" stroke-linejoin="miter"/>
<g transform="translate(0 312.0)"><path d="M174.300 921.500 V937.500 A10.600 5.800 0 0 0 195.500 937.500 V921.500" fill="#fff" stroke="#c4c4c4" stroke-width="1.700"/><path d="M174.300 928.500 C175 930.800 177.500 932.400 180.600 932.700 V937.300 H189.200 V932.700 C192.300 932.400 194.800 930.800 195.500 928.500 V937.500 A10.600 5.800 0 0 1 174.300 937.500 Z" fill="#dcdcdc" stroke="#b4b4b4" stroke-width="1.700" stroke-linejoin="round"/><ellipse cx="184.900" cy="921.500" rx="10.600" ry="5.800" fill="#fff" stroke="#c8c8c8" stroke-width="1.700"/></g>
<path d="M132.8 1284.3 L142.8 1294.9 L132.8 1305.5" fill="none" stroke="#666" stroke-width="4.200" stroke-linecap="butt" stroke-linejoin="miter"/>
<g transform="translate(0 364.0)"><path d="M174.300 921.500 V937.500 A10.600 5.800 0 0 0 195.500 937.500 V921.500" fill="#fff" stroke="#c4c4c4" stroke-width="1.700"/><path d="M174.300 928.500 C175 930.800 177.500 932.400 180.600 932.700 V937.300 H189.200 V932.700 C192.300 932.400 194.800 930.800 195.500 928.500 V937.500 A10.600 5.800 0 0 1 174.300 937.500 Z" fill="#dcdcdc" stroke="#b4b4b4" stroke-width="1.700" stroke-linejoin="round"/><ellipse cx="184.900" cy="921.500" rx="10.600" ry="5.800" fill="#fff" stroke="#c8c8c8" stroke-width="1.700"/></g>
<path d="M132.8 1336.3 L142.8 1346.9 L132.8 1357.5" fill="none" stroke="#666" stroke-width="4.200" stroke-linecap="butt" stroke-linejoin="miter"/>
<g transform="translate(0 416.0)"><path d="M174.300 921.500 V937.500 A10.600 5.800 0 0 0 195.500 937.500 V921.500" fill="#fff" stroke="#c4c4c4" stroke-width="1.700"/><path d="M174.300 928.500 C175 930.800 177.500 932.400 180.600 932.700 V937.300 H189.200 V932.700 C192.300 932.400 194.800 930.800 195.500 928.500 V937.500 A10.600 5.800 0 0 1 174.300 937.500 Z" fill="#dcdcdc" stroke="#b4b4b4" stroke-width="1.700" stroke-linejoin="round"/><ellipse cx="184.900" cy="921.500" rx="10.600" ry="5.800" fill="#fff" stroke="#c8c8c8" stroke-width="1.700"/></g>
<path d="M132.8 1388.3 L142.8 1398.9 L132.8 1409.5" fill="none" stroke="#666" stroke-width="4.200" stroke-linecap="butt" stroke-linejoin="miter"/>
<g transform="translate(0 468.0)"><path d="M174.300 921.500 V937.500 A10.600 5.800 0 0 0 195.500 937.500 V921.500" fill="#fff" stroke="#c4c4c4" stroke-width="1.700"/><path d="M174.300 928.500 C175 930.800 177.500 932.400 180.600 932.700 V937.300 H189.200 V932.700 C192.300 932.400 194.800 930.800 195.500 928.500 V937.500 A10.600 5.800 0 0 1 174.300 937.500 Z" fill="#dcdcdc" stroke="#b4b4b4" stroke-width="1.700" stroke-linejoin="round"/><ellipse cx="184.900" cy="921.500" rx="10.600" ry="5.800" fill="#fff" stroke="#c8c8c8" stroke-width="1.700"/></g>
<path d="M132.8 1440.3 L142.8 1450.9 L132.8 1461.5" fill="none" stroke="#666" stroke-width="4.200" stroke-linecap="butt" stroke-linejoin="miter"/>
<g transform="translate(0 520.0)"><path d="M174.300 921.500 V937.500 A10.600 5.800 0 0 0 195.500 937.500 V921.500" fill="#fff" stroke="#c4c4c4" stroke-width="1.700"/><path d="M174.300 928.500 C175 930.800 177.500 932.400 180.600 932.700 V937.300 H189.200 V932.700 C192.300 932.400 194.800 930.800 195.500 928.500 V937.500 A10.600 5.800 0 0 1 174.300 937.500 Z" fill="#dcdcdc" stroke="#b4b4b4" stroke-width="1.700" stroke-linejoin="round"/><ellipse cx="184.900" cy="921.500" rx="10.600" ry="5.800" fill="#fff" stroke="#c8c8c8" stroke-width="1.700"/></g>
<path d="M132.8 1492.3 L142.8 1502.9 L132.8 1513.5" fill="none" stroke="#666" stroke-width="4.200" stroke-linecap="butt" stroke-linejoin="miter"/>
<g transform="translate(0 572.0)"><path d="M174.300 921.500 V937.500 A10.600 5.800 0 0 0 195.500 937.500 V921.500" fill="#fff" stroke="#c4c4c4" stroke-width="1.700"/><path d="M174.300 928.500 C175 930.800 177.500 932.400 180.600 932.700 V937.300 H189.200 V932.700 C192.300 932.400 194.800 930.800 195.500 928.500 V937.500 A10.600 5.800 0 0 1 174.300 937.500 Z" fill="#dcdcdc" stroke="#b4b4b4" stroke-width="1.700" stroke-linejoin="round"/><ellipse cx="184.900" cy="921.500" rx="10.600" ry="5.800" fill="#fff" stroke="#c8c8c8" stroke-width="1.700"/></g>
<path d="M132.8 1544.3 L142.8 1554.9 L132.8 1565.5" fill="none" stroke="#666" stroke-width="4.200" stroke-linecap="butt" stroke-linejoin="miter"/>
<g transform="translate(0 624.0)"><path d="M174.300 921.500 V937.500 A10.600 5.800 0 0 0 195.500 937.500 V921.500" fill="#fff" stroke="#c4c4c4" stroke-width="1.700"/><path d="M174.300 928.500 C175 930.800 177.500 932.400 180.600 932.700 V937.300 H189.200 V932.700 C192.300 932.400 194.800 930.800 195.500 928.500 V937.500 A10.600 5.800 0 0 1 174.300 937.500 Z" fill="#dcdcdc" stroke="#b4b4b4" stroke-width="1.700" stroke-linejoin="round"/><ellipse cx="184.900" cy="921.500" rx="10.600" ry="5.800" fill="#fff" stroke="#c8c8c8" stroke-width="1.700"/></g></svg>
<div class="abs" style="left:158.400px;top:161.400px;width:242.700px;height:58.600px;border:2px solid #a9a9a9;border-radius:6px;background:#fff"></div>
<span class="tx" style="left:169.7px;top:179.2px;font-size:27.0px;color:#8a8a8a;letter-spacing:-0.40px;font-style:italic;">Filter by name</span>
<span class="tx" style="left:87.2px;top:240.4px;font-size:27.0px;color:#333;letter-spacing:-0.59px;font-weight:bold;">Instances (54)</span>
<span class="tx" style="left:131.5px;top:294.5px;font-size:27.0px;color:#333;letter-spacing:-0.67px;">Exercise 3 ...</span>
<span class="tx" style="left:171.2px;top:346.2px;font-size:27.0px;color:#999;letter-spacing:-0.07px;">Origin</span>
<span class="tx" style="left:125.1px;top:762.2px;font-size:27.0px;color:#333;letter-spacing:-0.34px;">Mate Features (40)</span>
<span class="tx" style="left:209.2px;top:813.9px;font-size:27.0px;color:#999;letter-spacing:-0.79px;">Group 1</span>
<span class="tx" style="left:171.0px;top:398.4px;font-size:27.0px;color:#333;letter-spacing:-0.59px;">Origin Cube &lt;1&gt;</span>
<span class="tx" style="left:171.0px;top:450.4px;font-size:27.0px;color:#333;letter-spacing:0.01px;">Structure (7)</span>
<span class="tx" style="left:171.0px;top:502.4px;font-size:27.0px;color:#333;letter-spacing:-0.52px;">Power (18)</span>
<span class="tx" style="left:171.0px;top:554.4px;font-size:27.0px;color:#333;letter-spacing:-0.30px;">Motors (13)</span>
<span class="tx" style="left:171.0px;top:606.4px;font-size:27.0px;color:#333;letter-spacing:-0.45px;">Wheels (8)</span>
<span class="tx" style="left:171.0px;top:658.4px;font-size:27.0px;color:#333;letter-spacing:-0.33px;">Fasteners (6)</span>
<span class="tx" style="left:171.0px;top:710.4px;font-size:27.0px;color:#333;letter-spacing:-0.84px;">Game Piece &lt;1&gt;</span>
<span class="tx" style="left:209.2px;top:866.2px;font-size:27.0px;color:#999;letter-spacing:-0.58px;">Fastened 1</span>
<span class="tx" style="left:209.2px;top:918.2px;font-size:27.0px;color:#999;letter-spacing:-0.36px;">Fastened 2</span>
<span class="tx" style="left:209.2px;top:970.2px;font-size:27.0px;color:#999;letter-spacing:-0.30px;">Fastened 3</span>
<span class="tx" style="left:209.2px;top:1022.2px;font-size:27.0px;color:#999;letter-spacing:-0.48px;">Fastened 11</span>
<span class="tx" style="left:209.2px;top:1074.2px;font-size:27.0px;color:#999;letter-spacing:-0.53px;">Fastened 12</span>
<span class="tx" style="left:209.2px;top:1126.2px;font-size:27.0px;color:#999;letter-spacing:-0.48px;">Fastened 13</span>
<span class="tx" style="left:209.2px;top:1178.2px;font-size:27.0px;color:#999;letter-spacing:-0.43px;">Fastened 14</span>
<span class="tx" style="left:209.2px;top:1230.2px;font-size:27.0px;color:#999;letter-spacing:-0.48px;">Fastened 15</span>
<span class="tx" style="left:209.2px;top:1282.2px;font-size:27.0px;color:#999;letter-spacing:-0.53px;">Fastened 17</span>
<span class="tx" style="left:209.2px;top:1334.2px;font-size:27.0px;color:#999;letter-spacing:-0.48px;">Fastened 18</span>
<span class="tx" style="left:209.2px;top:1386.2px;font-size:27.0px;color:#999;letter-spacing:-0.28px;">Fastened 20</span>
<span class="tx" style="left:209.2px;top:1438.2px;font-size:27.0px;color:#999;letter-spacing:-0.73px;">Fastened 21 (1)</span>
<span class="tx" style="left:209.2px;top:1490.2px;font-size:27.0px;color:#999;letter-spacing:-0.63px;">Fastened 22 (1)</span>
<span class="tx" style="left:209.2px;top:1542.2px;font-size:27.0px;color:#999;letter-spacing:-0.28px;">Fastened 24</span>
<div class="abs" style="left:490px;top:811px;width:66px;height:67px;border:2px solid #b5b5b5;border-left:none;background:#fff"></div>
<svg class="abs" style="left:495px;top:820px" width="60" height="55" viewBox="495 820 60 55"><path d="M504.800 832.500 L509.800 837 L514.800 832.500" fill="none" stroke="#333" stroke-width="2"/><path d="M509.800 840 V865.500" stroke="#333" stroke-width="2.200"/><path d="M521 832.800 H540 M514 842.800 H540 M514 852.800 H540 M514 862.800 H540" stroke="#333" stroke-width="2"/></svg>
<svg class="abs" style="left:1100px;top:230px" width="1020" height="1350" viewBox="1100 230 1020 1350"><defs>
<radialGradient id="gBall" cx="1986" cy="872" r="125" gradientUnits="userSpaceOnUse"><stop offset="0" stop-color="#fce48f"/><stop offset=".25" stop-color="#f6d166"/><stop offset=".7" stop-color="#e6b94c"/><stop offset="1" stop-color="#cfa23c"/></radialGradient>
<linearGradient id="gHood" x1="1420" y1="400" x2="1640" y2="270" gradientUnits="userSpaceOnUse"><stop offset="0" stop-color="#36592f"/><stop offset=".5" stop-color="#4b7f41"/><stop offset="1" stop-color="#5c9a50"/></linearGradient>
<linearGradient id="gRoll" x1="1585" y1="300" x2="1607" y2="324" gradientUnits="userSpaceOnUse"><stop offset="0" stop-color="#5a9a4e"/><stop offset=".45" stop-color="#7cc067"/><stop offset="1" stop-color="#5fa352"/></linearGradient>
<linearGradient id="gWheel" x1="1690" y1="480" x2="1880" y2="640" gradientUnits="userSpaceOnUse"><stop offset="0" stop-color="#6fa954"/><stop offset=".4" stop-color="#84bb62"/><stop offset="1" stop-color="#78b159"/></linearGradient>
<linearGradient id="gPul" x1="0" y1="0" x2="1" y2="1"><stop offset="0" stop-color="#2b2b2b"/><stop offset=".45" stop-color="#1e1e1e"/><stop offset="1" stop-color="#181818"/></linearGradient>
<linearGradient id="gBody" x1="0" y1="0" x2="1" y2="1"><stop offset="0" stop-color="#3d3d3d"/><stop offset=".5" stop-color="#2a2a2a"/><stop offset="1" stop-color="#1b1b1b"/></linearGradient>
<clipPath id="cFront"><path d="M1146 627 L1406.500 408.700 L1437.500 389.800 L1471.800 374.400 L1506.200 366.600 L1528.500 364 Q1546 362 1554 376 L1932 766 Q1962 796 1969 840 V1130 Q1969 1149 1948 1148 L1293 966 L1250 945 L1172 784 Q1128 760 1127 712 Q1126 660 1146 627 Z"/></clipPath>
</defs>
<path d="M1651 257 L1665 252 L1680 262 L1677 269 L2055 660 Q2086 690 2092.500 733 V1000 Q2094 1022 2081 1036 L1964 1144 Q1952 1152 1938 1148 L1700 1077.500 L1293 966.500 L1250 945 L1172 784 Q1128 760 1127 712 Q1126 660 1146.500 627.400 L1522.400 308.800 Q1580 268 1651 257 Z" fill="#2f3133"/>
<path d="M1677 269 L2055 660 Q2086 690 2092.500 733 V1000 Q2093 1015 2082 1030 V736 Q2076 696 2047 664 L1670 285 Z" fill="#323538"/>
<path d="M1668 468 Q1700 418 1752 414 Q1830 418 1890 500 Q1940 580 1932 670 Q1926 720 1905 745 L1877 692 Q1876 600 1800 509 Q1740 450 1668 468 Z" fill="#2b2b29" stroke="#0b0b0b" stroke-width="1.200"/>
<path d="M1688 440 Q1760 425 1812 472 Q1880 540 1895 640 Q1900 700 1886 735" fill="none" stroke="#0b0b0b" stroke-width="1.200"/>
<path d="M1890 500 Q1915 520 1930 560 M1860 700 Q1880 740 1878 770" fill="none" stroke="#0b0b0b" stroke-width="1"/>
<path d="M1406.500 408.700 L1522.400 308.800 Q1580 268 1651 257 L1644 268 L1528.500 364 L1506.200 366.600 L1471.800 374.400 L1437.500 389.800 Z" fill="url(#gHood)"/>
<path d="M1644.500 262 L1664 281 L1556 385 L1531 364 Z" fill="url(#gRoll)"/>
<path d="M1644.500 262 L1531 364 M1664 281 L1556 385" stroke="#0b0b0b" stroke-width="1.300" fill="none"/>
<ellipse cx="1543.0" cy="375.0" rx="8.0" ry="16.5" transform="rotate(-47 1543.0 375.0)" fill="#5f9e52" stroke="#0b0b0b" stroke-width="1.2"/>
<path d="M1651 257 L1665 252 L1680 262 L1678 272 L1666 284 L1660 270 Z" fill="#f4f4f4" fill-opacity=".8" stroke="#222" stroke-width="1"/>
<path d="M1648 474 Q1680 462 1707 466 Q1738 466 1761 477 Q1784 490 1800.500 509 Q1826 535 1843.400 563 Q1860 592 1868.500 624 Q1876 655 1877.400 692 L1860 700 L1850.600 691.800 Q1838 682 1822 670 Q1804 643 1786 616.600 Q1766 588 1743 563 Q1716 535 1689.500 510.500 Z" fill="url(#gWheel)"/>
<g fill="none" stroke="#0b0b0b" stroke-width="1.300"><path d="M1648 474 Q1738 450 1800.500 509 Q1872 585 1877.400 692"/><path d="M1664 489 Q1740 478 1795 540 Q1846 600 1856 695"/><path d="M1672 496 Q1735 500 1782 560 Q1822 610 1834 680"/><path d="M1683 505 Q1730 520 1770 575 Q1800 615 1815 665"/><path d="M1689.500 510.500 Q1743 563 1786 616.600 L1850.600 691.800"/></g>
<path d="M1984 690 Q2000 680 2024 684 Q2042 684 2048 702 Q2052 730 2040 752 L2027 766 Z" fill="#3b3d3b" stroke="#0b0b0b" stroke-width="1.200"/>
<ellipse cx="2034.0" cy="716.0" rx="9.0" ry="31.0" transform="rotate(-18 2034.0 716.0)" fill="#55554f" stroke="#0b0b0b" stroke-width="1"/>
<ellipse cx="2040.0" cy="712.0" rx="7.0" ry="26.0" transform="rotate(-18 2040.0 712.0)" fill="#2a2a2a" stroke="#0b0b0b" stroke-width="1"/>
<path d="M1883 705 Q1905 688 1940 683.600 Q1965 684 1984 690 Q2008 710 2020.700 733 Q2030 758 2027 780 Q2026 795 2020.700 804 Q2010 820 1997 827.500 L1971.300 840 L1973.400 819 Q1972 800 1967 780 Q1958 760 1945.500 743.700 Q1930 728 1913.300 718 Q1898 710 1883 705 Z" fill="#7db65c"/>
<path d="M1883 705 Q1898 710 1913.300 718 Q1930 728 1945.500 743.700 Q1958 760 1967 780 Q1972 800 1973.400 819 L1971.300 840 L1982 834 Q1984 800 1975 772 Q1962 745 1940 727 Q1915 710 1892 700 Z" fill="#4d7d42"/>
<g fill="none" stroke="#0b0b0b" stroke-width="1.300"><path d="M1883 705 Q1905 688 1940 683.600 Q1965 684 1984 690 Q2008 710 2020.700 733 Q2030 758 2027 780 Q2026 795 2020.700 804 Q2010 820 1997 827.500"/><path d="M1925 686 Q1960 700 1985 735 Q2003 770 1999 826"/><path d="M1905 690 Q1945 705 1970 738 Q1990 775 1986 832"/><path d="M1892 700 Q1915 710 1940 727 Q1962 745 1975 772 Q1984 800 1982 834"/></g>
<path d="M1970.800 1000 L2031.700 962.300 L2066.300 973 Q2078 975 2081 990 V1036 L1970.800 1133 Z" fill="#528f46"/>
<path d="M1970.800 1000 L2031.700 962.300 L2066.300 973 L1970.800 1055.300 Z" fill="#5a9a4e"/>
<path d="M1970.800 1055.300 L2066.300 973 Q2078 975 2080.200 991.200 L1970.800 1081.700 Z" fill="#6fb45f"/>
<path d="M1970.800 1063 L2072 976.500 L2077.500 981 L1970.800 1072 Z" fill="#84c873" opacity=".8"/>
<path d="M1970.800 1124 L2081 1029 V1036 L1970.800 1133 Z" fill="#467c3c"/>
<path d="M2031.700 962.300 L2066.300 973 Q2078 975 2081 990 V1036 L1970.800 1133 M2066.300 973 L1970.800 1055.300 M2080.200 991.200 L1970.800 1081.700 M2081 1029 L1970.800 1124" fill="none" stroke="#0b0b0b" stroke-width="1.300"/>
<circle cx="1951" cy="917" r="93" fill="url(#gBall)" stroke="#0b0b0b" stroke-width="1.200"/>
<path d="M1967 780 L1999 770 Q2002 800 1997 827.500 L1971.300 840 L1973.400 819 Q1972 800 1967 780 Z" fill="#7db65c"/>
<path d="M1967 780 Q1972 800 1973.400 819 L1971.300 840 L1982 834 Q1984 800 1975 772 Z" fill="#4d7d42"/>
<path d="M1999 790 Q2001 812 1997 827.500 L1971.300 840 M1982 834 Q1984 800 1975 772" fill="none" stroke="#0b0b0b" stroke-width="1.300"/>
<g clip-path="url(#cFront)">
<rect x="1100" y="250" width="900" height="920" fill="#2b2d2f"/>
<path d="M1506.2 407.0 C1500.5 409.0 1483.2 413.9 1471.8 419.0 C1460.3 424.1 1447.5 431.0 1437.5 437.9 C1427.5 444.8 1419.7 452.3 1411.7 460.3 C1403.7 468.3 1395.6 477.4 1389.3 486.0 C1383.0 494.6 1378.2 501.8 1373.9 511.8 C1369.6 521.8 1366.2 534.3 1363.6 546.2 C1361.0 558.1 1359.5 571.2 1358.2 583.1 C1356.9 595.0 1355.9 606.0 1355.6 617.5 C1355.3 629.0 1355.1 638.0 1356.5 651.8 C1357.9 665.5 1359.1 680.5 1364.0 700.0 C1368.9 719.5 1377.6 745.8 1386.0 768.7 C1394.4 791.6 1403.3 816.8 1414.5 837.4 C1425.7 858.0 1440.0 876.4 1453.0 892.4 C1466.0 908.4 1477.8 922.1 1492.4 933.6 C1507.0 945.1 1532.5 956.5 1540.5 961.1 L1700 1010 L1969 1090 V1000 Q1900 1030 1850 990 Q1800 960 1790 900 L1650 860 C1640.0 853.3 1607.5 836.7 1590.0 820.0 C1572.5 803.3 1557.2 780.0 1545.0 760.0 C1532.8 740.0 1525.2 718.0 1517.1 700.0 C1509.0 682.0 1501.9 665.5 1496.5 651.8 C1491.1 638.0 1487.9 629.0 1484.5 617.5 C1481.1 606.0 1478.3 595.0 1475.9 583.1 C1473.5 571.2 1471.2 558.1 1470.1 546.2 C1469.0 534.3 1468.9 523.2 1469.2 511.8 C1469.5 500.4 1470.2 488.9 1471.8 477.5 C1473.4 466.1 1475.8 453.7 1478.7 443.1 C1481.6 432.5 1487.3 418.8 1489.0 413.9 Z" fill="#252e28"/>
<path d="M1489.0 413.9 C1487.3 418.8 1481.6 432.5 1478.7 443.1 C1475.8 453.7 1473.4 466.1 1471.8 477.5 C1470.2 488.9 1469.5 500.4 1469.2 511.8 C1468.9 523.2 1469.0 534.3 1470.1 546.2 C1471.2 558.1 1473.5 571.2 1475.9 583.1 C1478.3 595.0 1481.1 606.0 1484.5 617.5 C1487.9 629.0 1491.1 638.0 1496.5 651.8 C1501.9 665.5 1509.0 682.0 1517.1 700.0 C1525.2 718.0 1532.8 740.0 1545.0 760.0 C1557.2 780.0 1572.5 803.3 1590.0 820.0 C1607.5 836.7 1640.0 853.3 1650.0 860.0 L1790 900 L1850 990 L1969 1010 V840 L1932 766 L1554 376 L1519 384 Z" fill="#242629"/>
<path d="M1492.400 933.600 L1540.500 961.100 L1757 1044 L1969 1100 V1070 L1760 1010 Q1620 985 1540 935 Z" fill="#2a372c"/>
<path d="M1528.5 364.0 C1524.8 364.4 1515.7 364.9 1506.2 366.6 C1496.8 368.3 1483.2 370.5 1471.8 374.4 C1460.3 378.3 1448.4 384.1 1437.5 389.8 C1426.6 395.5 1418.0 399.8 1406.5 408.7 C1395.0 417.6 1379.3 431.6 1368.7 443.1 C1358.1 454.6 1349.6 466.1 1343.0 477.5 C1336.4 488.9 1332.7 500.4 1329.2 511.8 C1325.8 523.2 1323.8 534.3 1322.3 546.2 C1320.8 558.1 1320.8 571.2 1320.4 583.1 C1320.0 595.0 1319.6 606.0 1319.9 617.5 C1320.2 629.0 1320.5 638.0 1322.1 651.8 C1323.7 665.5 1324.5 680.5 1329.5 700.0 C1334.5 719.5 1344.1 745.8 1352.0 768.7 C1359.9 791.6 1368.7 816.8 1377.0 837.4 C1385.3 858.0 1394.2 875.2 1402.0 892.4 C1409.8 909.6 1417.8 929.9 1423.7 940.5 C1429.6 951.1 1435.1 953.4 1437.4 956.0 L1540.5 961.1 C1532.5 956.5 1507.0 945.1 1492.4 933.6 C1477.8 922.1 1466.0 908.4 1453.0 892.4 C1440.0 876.4 1425.7 858.0 1414.5 837.4 C1403.3 816.8 1394.4 791.6 1386.0 768.7 C1377.6 745.8 1368.9 719.5 1364.0 700.0 C1359.1 680.5 1357.9 665.5 1356.5 651.8 C1355.1 638.0 1355.3 629.0 1355.6 617.5 C1355.9 606.0 1356.9 595.0 1358.2 583.1 C1359.5 571.2 1361.0 558.1 1363.6 546.2 C1366.2 534.3 1369.6 521.8 1373.9 511.8 C1378.2 501.8 1383.0 494.6 1389.3 486.0 C1395.6 477.4 1403.7 468.3 1411.7 460.3 C1419.7 452.3 1427.5 444.8 1437.5 437.9 C1447.5 431.0 1460.3 424.1 1471.8 419.0 C1483.2 413.9 1500.5 409.0 1506.2 407.0 Z" fill="#28342a"/>
<g fill="none" stroke="#0b0b0b" stroke-width="1.300"><path d="M1528.5 364.0 C1524.8 364.4 1515.7 364.9 1506.2 366.6 C1496.8 368.3 1483.2 370.5 1471.8 374.4 C1460.3 378.3 1448.4 384.1 1437.5 389.8 C1426.6 395.5 1418.0 399.8 1406.5 408.7 C1395.0 417.6 1379.3 431.6 1368.7 443.1 C1358.1 454.6 1349.6 466.1 1343.0 477.5 C1336.4 488.9 1332.7 500.4 1329.2 511.8 C1325.8 523.2 1323.8 534.3 1322.3 546.2 C1320.8 558.1 1320.8 571.2 1320.4 583.1 C1320.0 595.0 1319.6 606.0 1319.9 617.5 C1320.2 629.0 1320.5 638.0 1322.1 651.8 C1323.7 665.5 1324.5 680.5 1329.5 700.0 C1334.5 719.5 1344.1 745.8 1352.0 768.7 C1359.9 791.6 1368.7 816.8 1377.0 837.4 C1385.3 858.0 1394.2 875.2 1402.0 892.4 C1409.8 909.6 1417.8 929.9 1423.7 940.5 C1429.6 951.1 1435.1 953.4 1437.4 956.0"/><path d="M1506.2 407.0 C1500.5 409.0 1483.2 413.9 1471.8 419.0 C1460.3 424.1 1447.5 431.0 1437.5 437.9 C1427.5 444.8 1419.7 452.3 1411.7 460.3 C1403.7 468.3 1395.6 477.4 1389.3 486.0 C1383.0 494.6 1378.2 501.8 1373.9 511.8 C1369.6 521.8 1366.2 534.3 1363.6 546.2 C1361.0 558.1 1359.5 571.2 1358.2 583.1 C1356.9 595.0 1355.9 606.0 1355.6 617.5 C1355.3 629.0 1355.1 638.0 1356.5 651.8 C1357.9 665.5 1359.1 680.5 1364.0 700.0 C1368.9 719.5 1377.6 745.8 1386.0 768.7 C1394.4 791.6 1403.3 816.8 1414.5 837.4 C1425.7 858.0 1440.0 876.4 1453.0 892.4 C1466.0 908.4 1477.8 922.1 1492.4 933.6 C1507.0 945.1 1532.5 956.5 1540.5 961.1"/><path d="M1489.0 413.9 C1487.3 418.8 1481.6 432.5 1478.7 443.1 C1475.8 453.7 1473.4 466.1 1471.8 477.5 C1470.2 488.9 1469.5 500.4 1469.2 511.8 C1468.9 523.2 1469.0 534.3 1470.1 546.2 C1471.2 558.1 1473.5 571.2 1475.9 583.1 C1478.3 595.0 1481.1 606.0 1484.5 617.5 C1487.9 629.0 1491.1 638.0 1496.5 651.8 C1501.9 665.5 1509.0 682.0 1517.1 700.0 C1525.2 718.0 1532.8 740.0 1545.0 760.0 C1557.2 780.0 1572.5 803.3 1590.0 820.0 C1607.5 836.7 1640.0 853.3 1650.0 860.0"/></g>
<path d="M1540.500 961.100 Q1620 985 1760 1010 L1969 1070" fill="none" stroke="#0b0b0b" stroke-width="1"/>
<ellipse cx="1640.0" cy="668.0" rx="118.0" ry="140.0" transform="rotate(-12 1640.0 668.0)" fill="#222427" stroke="#0b0b0b" stroke-width="1.3"/>
<ellipse cx="1648.0" cy="664.0" rx="128.0" ry="152.0" transform="rotate(-12 1648.0 664.0)" fill="none" stroke="#0b0b0b" stroke-width="1.2"/>
<g fill="none" stroke="#0b0b0b" stroke-width="1.100"><path d="M1600 540 Q1660 470 1740 490"/><path d="M1590 560 Q1640 500 1720 505"/><path d="M1575 590 Q1620 520 1700 520"/><path d="M1760 540 Q1800 620 1790 720 Q1780 780 1750 810"/><path d="M1775 560 Q1815 640 1805 730 Q1795 790 1770 820"/><path d="M1640 815 Q1720 850 1790 790"/><path d="M1620 800 Q1700 880 1800 800"/></g>
<path d="M1648 474 Q1738 450 1800.500 509 Q1872 585 1877.400 692 L1850.600 691.800 L1786 616.600 Q1743 563 1689.500 510.500 Z" fill="#3a5a33"/>
<circle cx="1945" cy="908" r="103" fill="#2b2c2b" stroke="#0b0b0b" stroke-width="1.200"/>
<path d="M1293 966.500 L1969 1150 V1105 Q1960 1085 1930 1078 L1790 1085 L1440 985 L1300 945 Z" fill="#303335"/>
<path d="M1172 784 L1250 945 L1293 966.500 L1969 1150 V1141 L1297 958 L1260 938 L1184 782 Z" fill="#3a3c3f"/>
<path d="M1184 782 L1260 938 L1297 958 L1948 1136" fill="none" stroke="#0b0b0b" stroke-width="1"/>
<path d="M1790 1040 L1930 1078 Q1958 1088 1962 1120" fill="none" stroke="#0b0b0b" stroke-width="1.200"/>
<path d="M1690 905 L1610 990 M1790 905 L1700 1010" stroke="#0b0b0b" stroke-width="1" fill="none"/>
</g>
<path d="M1554 376 L1932 766 Q1962 796 1969 840 V1130 L1960.500 1124 V846 Q1954 806 1924 778 L1545 386 Z" fill="#2f3235" fill-opacity=".86" stroke="#0b0b0b" stroke-width="1"/>
<path d="M1437.400 956 L1757 1047 L1777.500 1053.800 V1072 L1757 1081.500 L1437.400 987 Z" fill="#1d1e1f" stroke="#0b0b0b" stroke-width="1.200"/>
<path d="M1440 959.500 L1757 1050" stroke="#0a0a0a" stroke-width="2.600"/><path d="M1757 1047 V1081.500" stroke="#0a0a0a" stroke-width="1"/>
<circle cx="1490.7" cy="988.6" r="4.300" fill="#2a2b2c" stroke="#0b0b0b" stroke-width="1"/>
<circle cx="1526.7" cy="998.9" r="4.300" fill="#2a2b2c" stroke="#0b0b0b" stroke-width="1"/>
<circle cx="1561.0" cy="1009.2" r="4.300" fill="#2a2b2c" stroke="#0b0b0b" stroke-width="1"/>
<circle cx="1631.5" cy="1029.8" r="4.300" fill="#2a2b2c" stroke="#0b0b0b" stroke-width="1"/>
<circle cx="1667.6" cy="1040.1" r="4.300" fill="#2a2b2c" stroke="#0b0b0b" stroke-width="1"/>
<circle cx="1703.6" cy="1050.4" r="4.300" fill="#2a2b2c" stroke="#0b0b0b" stroke-width="1"/>
<ellipse cx="1224.5" cy="693.0" rx="79.7" ry="88.6" transform="rotate(-41 1224.5 693.0)" fill="#2e3033" stroke="#0b0b0b" stroke-width="1.2"/><ellipse cx="1220.5" cy="697.0" rx="49.4" ry="54.9" transform="rotate(-41 1220.5 697.0)" fill="#292b2d" stroke="#0b0b0b" stroke-width="1"/>
<ellipse cx="1308.0" cy="867.0" rx="74.7" ry="83.0" transform="rotate(-41 1308.0 867.0)" fill="#2e3033" stroke="#0b0b0b" stroke-width="1.2"/><ellipse cx="1304.0" cy="871.0" rx="46.3" ry="51.5" transform="rotate(-41 1304.0 871.0)" fill="#292b2d" stroke="#0b0b0b" stroke-width="1"/>
<circle cx="1165" cy="633" r="4.500" fill="#26282a" stroke="#0b0b0b" stroke-width="1"/>
<circle cx="1262" cy="638" r="4.500" fill="#26282a" stroke="#0b0b0b" stroke-width="1"/>
<circle cx="1290" cy="742" r="4.500" fill="#26282a" stroke="#0b0b0b" stroke-width="1"/>
<circle cx="1242" cy="822" r="4.500" fill="#26282a" stroke="#0b0b0b" stroke-width="1"/>
<circle cx="1338" cy="812" r="4.500" fill="#26282a" stroke="#0b0b0b" stroke-width="1"/>
<circle cx="1372" cy="912" r="4.500" fill="#26282a" stroke="#0b0b0b" stroke-width="1"/>
<circle cx="1204" cy="772" r="4.500" fill="#26282a" stroke="#0b0b0b" stroke-width="1"/>
<ellipse cx="1212.0" cy="703.3" rx="56.0" ry="63.5" transform="rotate(-41 1212.0 703.3)" fill="#171717" stroke="#0b0b0b" stroke-width="1.2"/><ellipse cx="1205.7" cy="708.9" rx="44.8" ry="50.8" transform="rotate(-41 1205.7 708.9)" fill="#3a3a3a" stroke="#0b0b0b" stroke-width="1"/>
<ellipse cx="1297.8" cy="879.5" rx="43.5" ry="48.5" transform="rotate(-41 1297.8 879.5)" fill="#171717" stroke="#0b0b0b" stroke-width="1.2"/><ellipse cx="1291.5" cy="885.1" rx="34.8" ry="38.8" transform="rotate(-41 1291.5 885.1)" fill="#3a3a3a" stroke="#0b0b0b" stroke-width="1"/>
<ellipse cx="1644.6" cy="689.1" rx="44.0" ry="50.0" transform="rotate(-41 1644.6 689.1)" fill="#1b1b1b" stroke="#0b0b0b" stroke-width="1.2"/>
<ellipse cx="1634.0" cy="698.3" rx="50.0" ry="57.0" transform="rotate(-41 1634.0 698.3)" fill="#1a1a1a" stroke="#0b0b0b" stroke-width="1.2"/>
<polygon points="1569.2,682.1 1594.7,659.7 1667.3,742.3 1641.8,764.7" fill="url(#gBody)" stroke="none" stroke-width="1.2" stroke-linejoin="round"/>
<ellipse cx="1631.0" cy="701.0" rx="48.0" ry="55.0" transform="rotate(-41 1631.0 701.0)" fill="#2e2e2e" stroke="#0b0b0b" stroke-width="1"/>
<ellipse cx="1868.1" cy="829.1" rx="83.0" ry="94.0" transform="rotate(-41 1868.1 829.1)" fill="#191919" stroke="#0b0b0b" stroke-width="1.2"/>
<ellipse cx="1860.6" cy="835.7" rx="76.0" ry="86.0" transform="rotate(-41 1860.6 835.7)" fill="#242424" stroke="#0b0b0b" stroke-width="1"/>
<polygon points="1189.0,652.8 1592.0,653.0 1600.0,661.0 1596.0,679.0 1210.0,676.5 1196.0,666.0" fill="#1e1e1e" stroke="#0b0b0b" stroke-width="1.2" stroke-linejoin="round"/>
<polygon points="1189.0,652.8 1592.0,653.0 1598.0,665.5 1196.0,665.5" fill="#272727" stroke="#0b0b0b" stroke-width="1.2" stroke-linejoin="round"/>
<polygon points="1239.0,759.5 1565.0,773.0 1592.0,788.0 1230.0,779.0" fill="#1e1e1e" stroke="#0b0b0b" stroke-width="1.2" stroke-linejoin="round"/>
<polygon points="1239.0,759.5 1565.0,773.0 1572.0,780.0 1236.0,769.0" fill="#272727" stroke="#0b0b0b" stroke-width="1.2" stroke-linejoin="round"/>
<polygon points="1251.0,855.0 1700.0,770.0 1822.0,749.8 1800.0,772.0 1700.0,790.0 1290.0,861.0" fill="#1e1e1e" stroke="#0b0b0b" stroke-width="1.2" stroke-linejoin="round"/>
<polygon points="1251.0,855.0 1822.0,749.8 1812.0,759.0 1268.0,859.0" fill="#272727" stroke="#0b0b0b" stroke-width="1.2" stroke-linejoin="round"/>
<polygon points="1318.4,919.5 1700.0,909.1 1811.0,912.0 1850.6,932.4 1700.0,929.5 1306.0,944.0" fill="#1e1e1e" stroke="#0b0b0b" stroke-width="1.2" stroke-linejoin="round"/>
<polygon points="1318.4,919.5 1811.0,912.0 1822.0,920.0 1314.0,931.0" fill="#272727" stroke="#0b0b0b" stroke-width="1.2" stroke-linejoin="round"/>
<ellipse cx="1186.5" cy="725.7" rx="56.0" ry="63.5" transform="rotate(-41 1186.5 725.7)" fill="url(#gPul)" stroke="#0b0b0b" stroke-width="1.4"/><ellipse cx="1185.0" cy="727.2" rx="51.0" ry="58.5" transform="rotate(-41 1185.0 727.2)" fill="none" stroke="#060606" stroke-width="1"/>
<ellipse cx="1181.6" cy="729.0" rx="35.0" ry="39.5" transform="rotate(-41 1181.6 729.0)" fill="#232323" stroke="#0b0b0b" stroke-width="1.2"/>
<ellipse cx="1176.0" cy="734.0" rx="29.0" ry="33.0" transform="rotate(-41 1176.0 734.0)" fill="#1a1a1a" stroke="#0b0b0b" stroke-width="1"/>
<ellipse cx="1172.0" cy="738.0" rx="23.0" ry="26.0" transform="rotate(-41 1172.0 738.0)" fill="#2a2a2a" stroke="#0b0b0b" stroke-width="1.2"/>
<ellipse cx="1169.0" cy="741.0" rx="15.0" ry="17.0" transform="rotate(-41 1169.0 741.0)" fill="#1d1d1d" stroke="#0b0b0b" stroke-width="1.2"/>
<ellipse cx="1167.3" cy="742.3" rx="9.5" ry="10.7" transform="rotate(-41 1167.3 742.3)" fill="#242424" stroke="#0b0b0b" stroke-width="1"/>
<polygon points="1167.30,737.30 1162.97,739.80 1162.97,744.80 1167.30,747.30 1171.63,744.80 1171.63,739.80" fill="none" stroke="#0b0b0b" stroke-width=".8"/>
<ellipse cx="1272.3" cy="901.9" rx="43.5" ry="48.5" transform="rotate(-41 1272.3 901.9)" fill="url(#gPul)" stroke="#0b0b0b" stroke-width="1.4"/><ellipse cx="1270.8" cy="903.4" rx="39.5" ry="44.5" transform="rotate(-41 1270.8 903.4)" fill="none" stroke="#060606" stroke-width="1"/>
<polygon points="1258.8,887.0 1238.8,904.0 1265.2,934.0 1285.2,917.0" fill="#4a4a4a" stroke="none" stroke-width="1.2" stroke-linejoin="round"/>
<path d="M1262 893 L1244 909 M1268 897 L1250 913 M1274 902 L1256 918 M1280 907 L1262 923 M1285 913 L1268 928" stroke="#141414" stroke-width="2.600"/>
<ellipse cx="1251.8" cy="918.9" rx="21.0" ry="23.5" transform="rotate(-41 1251.8 918.9)" fill="#262626" stroke="#0b0b0b" stroke-width="1.2"/>
<ellipse cx="1250.0" cy="921.6" rx="13.0" ry="14.5" transform="rotate(-41 1250.0 921.6)" fill="#1b1b1b" stroke="#0b0b0b" stroke-width="1"/>
<ellipse cx="1246.9" cy="923.3" rx="7.2" ry="8.0" transform="rotate(-41 1246.9 923.3)" fill="#242424" stroke="#0b0b0b" stroke-width="1"/>
<ellipse cx="1598.0" cy="730.0" rx="57.0" ry="64.0" transform="rotate(-41 1598.0 730.0)" fill="url(#gPul)" stroke="#0b0b0b" stroke-width="1.4"/><ellipse cx="1596.5" cy="731.5" rx="51.0" ry="58.0" transform="rotate(-41 1596.5 731.5)" fill="none" stroke="#060606" stroke-width="1"/>
<polygon points="1616.8,715.7 1624.4,712.4 1627.7,718.0 1620.9,722.5 1622.8,728.8 1631.3,730.0 1631.6,736.3 1623.1,736.4 1621.8,742.5 1629.0,747.8 1626.2,753.1 1618.3,748.9 1614.0,753.2 1618.0,761.2 1612.8,764.0 1607.7,756.6 1601.6,757.9 1601.3,766.4 1595.1,766.1 1594.1,757.4 1587.9,755.4 1583.4,762.2 1577.9,758.7 1581.3,751.2 1576.6,746.3 1569.0,749.6 1565.7,744.0 1572.5,739.5 1570.6,733.2 1562.1,732.0 1561.8,725.7 1570.3,725.6 1571.6,719.5 1564.4,714.2 1567.2,708.9 1575.1,713.1 1579.4,708.8 1575.4,700.8 1580.6,698.0 1585.7,705.4 1591.8,704.1 1592.1,695.6 1598.3,695.9 1599.3,704.6 1605.5,706.6 1610.0,699.8 1615.5,703.3 1612.1,710.8" fill="#1c1c1c" stroke="#0b0b0b" stroke-width="1.500"/><ellipse cx="1596.7" cy="731.0" rx="21.5" ry="23.7" transform="rotate(-41 1596.7 731.0)" fill="#1f1f1f" stroke="#0b0b0b" stroke-width="1.3"/><ellipse cx="1592.7" cy="735.0" rx="8.1" ry="8.9" transform="rotate(-41 1592.7 735.0)" fill="#171717" stroke="#0b0b0b" stroke-width="1"/><polygon points="1592.70,730.19 1588.53,732.60 1588.53,737.40 1592.70,739.81 1596.87,737.40 1596.87,732.60" fill="none" stroke="#0b0b0b" stroke-width=".8"/>
<ellipse cx="1845.6" cy="848.9" rx="83.0" ry="94.0" transform="rotate(-41 1845.6 848.9)" fill="url(#gPul)" stroke="#0b0b0b" stroke-width="1.4"/><ellipse cx="1844.1" cy="850.4" rx="75.0" ry="86.0" transform="rotate(-41 1844.1 850.4)" fill="none" stroke="#060606" stroke-width="1"/>
<polygon points="1863.6,833.7 1871.2,830.4 1874.5,836.0 1867.7,840.5 1869.6,846.8 1878.1,848.0 1878.4,854.3 1869.9,854.4 1868.6,860.5 1875.8,865.8 1873.0,871.1 1865.1,866.9 1860.8,871.2 1864.8,879.2 1859.6,882.0 1854.5,874.6 1848.4,875.9 1848.1,884.4 1841.9,884.1 1840.9,875.4 1834.7,873.4 1830.2,880.2 1824.7,876.7 1828.1,869.2 1823.4,864.3 1815.8,867.6 1812.5,862.0 1819.3,857.5 1817.4,851.2 1808.9,850.0 1808.6,843.7 1817.1,843.6 1818.4,837.5 1811.2,832.2 1814.0,826.9 1821.9,831.1 1826.2,826.8 1822.2,818.8 1827.4,816.0 1832.5,823.4 1838.6,822.1 1838.9,813.6 1845.1,813.9 1846.1,822.6 1852.3,824.6 1856.8,817.8 1862.3,821.3 1858.9,828.8" fill="#1c1c1c" stroke="#0b0b0b" stroke-width="1.500"/><ellipse cx="1843.5" cy="849.0" rx="21.5" ry="23.7" transform="rotate(-41 1843.5 849.0)" fill="#1f1f1f" stroke="#0b0b0b" stroke-width="1.3"/><ellipse cx="1839.5" cy="853.0" rx="8.1" ry="8.9" transform="rotate(-41 1839.5 853.0)" fill="#171717" stroke="#0b0b0b" stroke-width="1"/><polygon points="1839.50,848.19 1835.33,850.60 1835.33,855.40 1839.50,857.81 1843.67,855.40 1843.67,850.60" fill="none" stroke="#0b0b0b" stroke-width=".8"/>
<ellipse cx="1526.7" cy="387.7" rx="5.9" ry="6.6" transform="rotate(-41 1526.7 387.7)" fill="#262626" stroke="#0b0b0b" stroke-width="1"/><polygon points="1515.9,389.4 1522.9,383.4 1530.5,392.0 1523.5,398.0" fill="#222" stroke="none" stroke-width="1.2" stroke-linejoin="round"/><ellipse cx="1519.7" cy="393.7" rx="8.6" ry="9.5" transform="rotate(-41 1519.7 393.7)" fill="#1f1f1f" stroke="#0b0b0b" stroke-width="1.1"/><polygon points="1519.70,389.71 1516.24,391.70 1516.24,395.69 1519.70,397.69 1523.16,395.69 1523.16,391.70" fill="none" stroke="#0b0b0b" stroke-width=".8"/>
<ellipse cx="1326.0" cy="616.0" rx="5.9" ry="6.6" transform="rotate(-41 1326.0 616.0)" fill="#262626" stroke="#0b0b0b" stroke-width="1"/><polygon points="1315.2,617.7 1322.2,611.7 1329.8,620.3 1322.8,626.3" fill="#222" stroke="none" stroke-width="1.2" stroke-linejoin="round"/><ellipse cx="1319.0" cy="622.0" rx="8.6" ry="9.5" transform="rotate(-41 1319.0 622.0)" fill="#1f1f1f" stroke="#0b0b0b" stroke-width="1.1"/><polygon points="1319.00,618.01 1315.54,620.00 1315.54,624.00 1319.00,625.99 1322.46,624.00 1322.46,620.00" fill="none" stroke="#0b0b0b" stroke-width=".8"/>
<ellipse cx="1205.0" cy="606.0" rx="5.9" ry="6.6" transform="rotate(-41 1205.0 606.0)" fill="#262626" stroke="#0b0b0b" stroke-width="1"/><polygon points="1194.2,607.7 1201.2,601.7 1208.8,610.3 1201.8,616.3" fill="#222" stroke="none" stroke-width="1.2" stroke-linejoin="round"/><ellipse cx="1198.0" cy="612.0" rx="8.6" ry="9.5" transform="rotate(-41 1198.0 612.0)" fill="#1f1f1f" stroke="#0b0b0b" stroke-width="1.1"/><polygon points="1198.00,608.01 1194.54,610.00 1194.54,614.00 1198.00,615.99 1201.46,614.00 1201.46,610.00" fill="none" stroke="#0b0b0b" stroke-width=".8"/>
<ellipse cx="1289.0" cy="696.0" rx="5.9" ry="6.6" transform="rotate(-41 1289.0 696.0)" fill="#262626" stroke="#0b0b0b" stroke-width="1"/><polygon points="1278.2,697.7 1285.2,691.7 1292.8,700.3 1285.8,706.3" fill="#222" stroke="none" stroke-width="1.2" stroke-linejoin="round"/><ellipse cx="1282.0" cy="702.0" rx="8.6" ry="9.5" transform="rotate(-41 1282.0 702.0)" fill="#1f1f1f" stroke="#0b0b0b" stroke-width="1.1"/><polygon points="1282.00,698.01 1278.54,700.00 1278.54,704.00 1282.00,705.99 1285.46,704.00 1285.46,700.00" fill="none" stroke="#0b0b0b" stroke-width=".8"/>
<ellipse cx="1275.0" cy="802.0" rx="5.9" ry="6.6" transform="rotate(-41 1275.0 802.0)" fill="#262626" stroke="#0b0b0b" stroke-width="1"/><polygon points="1264.2,803.7 1271.2,797.7 1278.8,806.3 1271.8,812.3" fill="#222" stroke="none" stroke-width="1.2" stroke-linejoin="round"/><ellipse cx="1268.0" cy="808.0" rx="8.6" ry="9.5" transform="rotate(-41 1268.0 808.0)" fill="#1f1f1f" stroke="#0b0b0b" stroke-width="1.1"/><polygon points="1268.00,804.01 1264.54,806.00 1264.54,810.00 1268.00,811.99 1271.46,810.00 1271.46,806.00" fill="none" stroke="#0b0b0b" stroke-width=".8"/>
<ellipse cx="1367.0" cy="872.0" rx="5.9" ry="6.6" transform="rotate(-41 1367.0 872.0)" fill="#262626" stroke="#0b0b0b" stroke-width="1"/><polygon points="1356.2,873.7 1363.2,867.7 1370.8,876.3 1363.8,882.3" fill="#222" stroke="none" stroke-width="1.2" stroke-linejoin="round"/><ellipse cx="1360.0" cy="878.0" rx="8.6" ry="9.5" transform="rotate(-41 1360.0 878.0)" fill="#1f1f1f" stroke="#0b0b0b" stroke-width="1.1"/><polygon points="1360.00,874.01 1356.54,876.00 1356.54,880.00 1360.00,881.99 1363.46,880.00 1363.46,876.00" fill="none" stroke="#0b0b0b" stroke-width=".8"/>
<ellipse cx="1326.0" cy="949.0" rx="5.9" ry="6.6" transform="rotate(-41 1326.0 949.0)" fill="#262626" stroke="#0b0b0b" stroke-width="1"/><polygon points="1315.2,950.7 1322.2,944.7 1329.8,953.3 1322.8,959.3" fill="#222" stroke="none" stroke-width="1.2" stroke-linejoin="round"/><ellipse cx="1319.0" cy="955.0" rx="8.6" ry="9.5" transform="rotate(-41 1319.0 955.0)" fill="#1f1f1f" stroke="#0b0b0b" stroke-width="1.1"/><polygon points="1319.00,951.01 1315.54,953.00 1315.54,957.00 1319.00,958.99 1322.46,957.00 1322.46,953.00" fill="none" stroke="#0b0b0b" stroke-width=".8"/>
<ellipse cx="1526.9" cy="955.0" rx="5.9" ry="6.6" transform="rotate(-41 1526.9 955.0)" fill="#262626" stroke="#0b0b0b" stroke-width="1"/><polygon points="1516.1,956.7 1523.1,950.7 1530.7,959.3 1523.7,965.3" fill="#222" stroke="none" stroke-width="1.2" stroke-linejoin="round"/><ellipse cx="1519.9" cy="961.0" rx="8.6" ry="9.5" transform="rotate(-41 1519.9 961.0)" fill="#1f1f1f" stroke="#0b0b0b" stroke-width="1.1"/><polygon points="1519.90,957.01 1516.44,959.00 1516.44,963.00 1519.90,964.99 1523.36,963.00 1523.36,959.00" fill="none" stroke="#0b0b0b" stroke-width=".8"/>
<ellipse cx="1451.3" cy="984.3" rx="5.9" ry="6.6" transform="rotate(-41 1451.3 984.3)" fill="#262626" stroke="#0b0b0b" stroke-width="1"/><polygon points="1440.5,986.0 1447.5,980.0 1455.1,988.6 1448.1,994.6" fill="#222" stroke="none" stroke-width="1.2" stroke-linejoin="round"/><ellipse cx="1444.3" cy="990.3" rx="8.6" ry="9.5" transform="rotate(-41 1444.3 990.3)" fill="#1f1f1f" stroke="#0b0b0b" stroke-width="1.1"/><polygon points="1444.30,986.31 1440.84,988.30 1440.84,992.29 1444.30,994.29 1447.76,992.29 1447.76,988.30" fill="none" stroke="#0b0b0b" stroke-width=".8"/>
<ellipse cx="1593.8" cy="1025.5" rx="5.9" ry="6.6" transform="rotate(-41 1593.8 1025.5)" fill="#262626" stroke="#0b0b0b" stroke-width="1"/><polygon points="1583.0,1027.2 1590.0,1021.2 1597.6,1029.8 1590.6,1035.8" fill="#222" stroke="none" stroke-width="1.2" stroke-linejoin="round"/><ellipse cx="1586.8" cy="1031.5" rx="8.6" ry="9.5" transform="rotate(-41 1586.8 1031.5)" fill="#1f1f1f" stroke="#0b0b0b" stroke-width="1.1"/><polygon points="1586.80,1027.51 1583.34,1029.51 1583.34,1033.49 1586.80,1035.49 1590.26,1033.49 1590.26,1029.51" fill="none" stroke="#0b0b0b" stroke-width=".8"/>
<ellipse cx="1734.7" cy="1065.0" rx="5.9" ry="6.6" transform="rotate(-41 1734.7 1065.0)" fill="#262626" stroke="#0b0b0b" stroke-width="1"/><polygon points="1723.9,1066.7 1730.9,1060.7 1738.5,1069.3 1731.5,1075.3" fill="#222" stroke="none" stroke-width="1.2" stroke-linejoin="round"/><ellipse cx="1727.7" cy="1071.0" rx="8.6" ry="9.5" transform="rotate(-41 1727.7 1071.0)" fill="#1f1f1f" stroke="#0b0b0b" stroke-width="1.1"/><polygon points="1727.70,1067.01 1724.24,1069.01 1724.24,1072.99 1727.70,1074.99 1731.16,1072.99 1731.16,1069.01" fill="none" stroke="#0b0b0b" stroke-width=".8"/>
<ellipse cx="1943.0" cy="1129.0" rx="5.9" ry="6.6" transform="rotate(-41 1943.0 1129.0)" fill="#262626" stroke="#0b0b0b" stroke-width="1"/><polygon points="1932.2,1130.7 1939.2,1124.7 1946.8,1133.3 1939.8,1139.3" fill="#222" stroke="none" stroke-width="1.2" stroke-linejoin="round"/><ellipse cx="1936.0" cy="1135.0" rx="8.6" ry="9.5" transform="rotate(-41 1936.0 1135.0)" fill="#1f1f1f" stroke="#0b0b0b" stroke-width="1.1"/><polygon points="1936.00,1131.01 1932.54,1133.01 1932.54,1136.99 1936.00,1138.99 1939.46,1136.99 1939.46,1133.01" fill="none" stroke="#0b0b0b" stroke-width=".8"/>
<circle cx="1595.8" cy="631.6" r="4.300" fill="none" stroke="#0b0b0b" stroke-width="1"/>
<circle cx="1711.2" cy="664.7" r="4.300" fill="none" stroke="#0b0b0b" stroke-width="1"/>
<circle cx="1711.2" cy="731.0" r="4.300" fill="none" stroke="#0b0b0b" stroke-width="1"/>
<circle cx="1655.0" cy="614.0" r="4.300" fill="none" stroke="#0b0b0b" stroke-width="1"/>
<path d="M1651 257 L1665 252 L1680 262 L1677 269 L2055 660 Q2086 690 2092.500 733 V1000 Q2094 1022 2081 1036 L1964 1144 Q1952 1152 1938 1148 L1700 1077.500 L1293 966.500 L1250 945 L1172 784 Q1128 760 1127 712 Q1126 660 1146.500 627.400 L1522.400 308.800 Q1580 268 1651 257 Z" fill="none" stroke="#0b0b0b" stroke-width="1.600" stroke-linejoin="round"/>
<path d="M1526 364 Q1546 362 1554 376 L1932 766 Q1962 796 1969 840 V1130 Q1969 1149 1948 1148" fill="none" stroke="#0b0b0b" stroke-width="1.400"/>
<path d="M2082 1030 V736 Q2076 696 2047 664 L1670 285" fill="none" stroke="#0b0b0b" stroke-width="1"/><polygon points="1664.1,1299.0 1806.3,1339.8 1806.3,1480.4 1724.3,1552.4 1583.0,1511.6 1583.0,1369.9" fill="#b9b9b9"/>
<polygon points="1664.1,1299.0 1806.3,1339.8 1724.3,1410.7 1583.0,1369.9" fill="#bdbdbd"/>
<polygon points="1583.0,1369.9 1724.3,1410.7 1724.3,1552.4 1583.0,1511.6" fill="#b4b4b4"/>
<polygon points="1583.0,1511.6 1664.1,1440.7 1806.3,1480.4 1724.3,1552.4" fill="#bababa"/>
<polygon points="1664.1,1393.3 1724.3,1410.7 1724.3,1458.0 1664.1,1440.7" fill="#ababab"/>
<g fill="none" stroke="#0a0a0a" stroke-width="2" stroke-linejoin="round"><polygon points="1664.1,1299.0 1806.3,1339.8 1806.3,1480.4 1724.3,1552.4 1583.0,1511.6 1583.0,1369.9"/><path d="M1583.0 1369.9 L1724.3 1410.7 L1806.3 1339.8 M1724.3 1410.7 L1724.3 1552.4"/><path d="M1664.1 1299.0 L1664.1 1440.7 M1664.1 1440.7 L1583.0 1511.6 M1664.1 1440.7 L1806.3 1480.4"/></g></svg>
<div class="abs" style="left:2960px;top:635px;width:70px;height:332px;border:2px solid #b0b0b0;background:#fff"></div>
<div class="abs" style="left:2960px;top:700.4px;width:70px;height:1.800px;background:#b0b0b0"></div>
<div class="abs" style="left:2960px;top:767.0px;width:70px;height:1.800px;background:#b0b0b0"></div>
<div class="abs" style="left:2960px;top:833.0px;width:70px;height:1.800px;background:#b0b0b0"></div>
<div class="abs" style="left:2960px;top:899.5px;width:70px;height:1.800px;background:#b0b0b0"></div>
<div class="abs" style="left:2960px;top:986.500px;width:70px;height:68px;border:2px solid #b0b0b0;background:#fff"></div>
<div class="abs" style="left:2970.400px;top:997px;width:47.600px;height:48.400px;border-radius:6px;background:#dcdcdc"></div>
<span class="tx" style="left:2971.500px;top:911px;font-size:38px;font-family:'Liberation Serif',serif;font-weight:bold;color:#333;letter-spacing:-0.500px">(<i style="letter-spacing:-1px">x</i>)</span>
<svg class="abs" style="left:2960px;top:630px" width="63" height="430" viewBox="2960 630 63 430"><rect x="2976.400" y="655.200" width="33.200" height="33.400" rx="5.500" fill="none" stroke="#333" stroke-width="1.900"/>
<rect x="2981.200" y="662.200" width="19.600" height="3.600" fill="#333"/>
<rect x="2989.400" y="668.4" width="15.400" height="3.500" fill="#333"/><rect x="2984" y="669.4" width="6" height="1.400" fill="#333"/>
<rect x="2989.400" y="674.4" width="15.400" height="3.500" fill="#333"/><rect x="2984" y="675.4" width="6" height="1.400" fill="#333"/>
<rect x="2989.400" y="680.3" width="15.400" height="3.500" fill="#333"/><rect x="2984" y="681.3" width="6" height="1.400" fill="#333"/>
<rect x="2983.200" y="665" width="1.800" height="17.800" fill="#333"/>
<g fill="#fff" stroke="#333" stroke-width="2" stroke-linejoin="round"><polygon points="2995.800,724.500 3010.100,731.300 3010.100,748.500 2995.800,756.300 2981.800,748.800 2981.800,731.600"/><path d="M2981.800 731.600 L2995.800 738.100 L3010.100 731.300 M2995.800 738.100 V756.300" fill="none"/></g>
<rect x="2973.200" y="718.500" width="19.700" height="14.900" fill="#2a4fb0"/>
<rect x="2975.0" y="720.3" width="4.200" height="3.4" fill="#9cc3f0"/>
<rect x="2975.0" y="725.3" width="4.200" height="2.4" fill="#fff"/>
<rect x="2975.0" y="729.7" width="4.200" height="2.4" fill="#fff"/>
<rect x="2980.9" y="720.3" width="4.200" height="3.4" fill="#9cc3f0"/>
<rect x="2980.9" y="725.3" width="4.200" height="2.4" fill="#fff"/>
<rect x="2980.9" y="729.7" width="4.200" height="2.4" fill="#fff"/>
<rect x="2986.8" y="720.3" width="4.200" height="3.4" fill="#9cc3f0"/>
<rect x="2986.8" y="725.3" width="4.200" height="2.4" fill="#fff"/>
<rect x="2986.8" y="729.7" width="4.200" height="2.4" fill="#fff"/>
<g stroke="#555" stroke-width="1.500" stroke-linejoin="round"><polygon points="2975.200,787.500 2977.500,786 2985.500,786 2986.800,787.800 2986.800,797.300 2978,797.300 2975.200,795" fill="#ddd"/><path d="M2975.200 787.500 L2978 789 H2986.800 M2978 789 V797.300" fill="none"/></g>
<path d="M2981.500 800 V802.900 H2994.700 V806" fill="none" stroke="#2a4fb0" stroke-width="1.800" stroke-dasharray="3.500 2"/>
<g stroke="#333" stroke-width="1.600" stroke-linejoin="round" fill="#fff"><polygon points="2999.500,798.400 3005.500,798.400 3010.600,803.500 3010.600,821.600 2993,821.600 2987.700,816.500 2987.700,810.500 2999.500,810"/><path d="M2999.500 798.400 L3004.500 803.500 H3010.600 M3004.500 803.500 V815.500 M2987.700 810.500 L2993 815.500 H3004.500 M2993 815.500 V821.600 M2999.500 810 L3004.500 815.500" fill="none" stroke-width="1.300"/></g>
<rect x="2976" y="873.500" width="26" height="13.600" fill="#fff" stroke="#333" stroke-width="1.900"/>
<path d="M2996.300 872 V853 H3010 V880" fill="none" stroke="#2a4fb0" stroke-width="1.700" stroke-dasharray="3.500 2.200"/>
<path d="M2996.300 880 A6.900 6.900 0 0 0 3010 880" fill="none" stroke="#2a4fb0" stroke-width="1.900"/><circle cx="3003.100" cy="880" r="3.300" fill="#fff" stroke="#666" stroke-width="1.800"/>
<rect x="2973.300" y="915.600" width="18.900" height="15.300" fill="#555"/>
<rect x="2974.7" y="917.0" width="4.400" height="3.2" fill="#999"/>
<rect x="2974.7" y="921.7" width="4.400" height="3.2" fill="#fff"/>
<rect x="2974.7" y="926.4" width="4.400" height="3.2" fill="#fff"/>
<rect x="2980.6" y="917.0" width="4.400" height="3.2" fill="#999"/>
<rect x="2980.6" y="921.7" width="4.400" height="3.2" fill="#fff"/>
<rect x="2980.6" y="926.4" width="4.400" height="3.2" fill="#fff"/>
<rect x="2986.5" y="917.0" width="4.400" height="3.2" fill="#999"/>
<rect x="2986.5" y="921.7" width="4.400" height="3.2" fill="#fff"/>
<rect x="2986.5" y="926.4" width="4.400" height="3.2" fill="#fff"/>
<rect x="2976" y="1003.500" width="36.400" height="37.400" fill="#2b5fdd" stroke="#1d1d1d" stroke-width="2.200"/>
<path d="M2979.800 1013 C2984 1009.500 2990 1009.500 2993.400 1012.500 V1034.500 C2990 1032.300 2984 1032.300 2979.800 1034.500 Z M3008.600 1013 C3004.400 1009.500 2998.400 1009.500 2995 1012.500 V1034.500 C2998.400 1032.300 3004.400 1032.300 3008.600 1034.500 Z" fill="#fff"/>
<path d="M2979.800 1036.800 C2984 1034.800 2990 1034.800 2994.200 1037 C2998.400 1034.800 3004.400 1034.800 3008.600 1036.800" fill="none" stroke="#fff" stroke-width="1.600"/></svg>
<svg class="abs" style="left:2680px;top:160px" width="343" height="330" viewBox="2680 160 343 330"><g fill="#e1e6ec"><polygon points="2829.200,194.100 2843.900,176.100 2858,194.100"/><polygon points="2829.200,456.500 2858,456.500 2843.900,474.500"/><polygon points="2713.200,310.600 2713.200,338.500 2694.600,324.500"/><polygon points="2974.800,310.600 2974.800,338.500 2993.400,324.500"/></g>
<path d="M2802 196.500 C2782 203 2765 213 2752 226" fill="none" stroke="#e1e6ec" stroke-width="10.500"/><polygon points="2737.700,218.500 2737.700,241.800 2761,239.600" fill="#e1e6ec"/>
<g transform="translate(5687.800 0) scale(-1 1)"><path d="M2802 196.500 C2782 203 2765 213 2752 226" fill="none" stroke="#e1e6ec" stroke-width="10.500"/><polygon points="2737.700,218.500 2737.700,241.800 2761,239.600" fill="#e1e6ec"/></g>
<path d="M2778 268 L2832 243.500 Q2838 241 2845 243 L2903 259.500 Q2908 261 2912 266 L2920 277 Q2923 281 2923 287 V360 Q2923 367 2918 371 L2876 404 Q2870 409 2862 409.500 L2848 410.500 Q2842 411 2836 408.500 L2775 383.500 Q2765 379 2765 369 V292 Q2765 276 2778 268 Z" fill="#e1e6ec"/>
<path d="M2800 277 L2838 252 Q2842 249.500 2847 251 L2890 263.500 Q2899 266.500 2892 273 L2871 293 Q2866 297.500 2858 297 L2822 294.500 Q2810 293.500 2801 287 Q2794 282 2800 277 Z" fill="#fff"/>
<path d="M2786 306 L2838 318 Q2849 321 2850 332 L2852 386 Q2852.500 398 2842 394 L2786 373 Q2777 369 2777 360 V314 Q2777 304 2786 306 Z" fill="#fff"/>
<path d="M2881 314 L2908 291 Q2915 285.500 2915 294 V357 Q2915 364 2910 368 L2883 390 Q2875 396 2874.500 387 L2873 333 Q2873 321 2881 314 Z" fill="#fff"/>
<g fill="#fff"><ellipse cx="2780.500" cy="287.500" rx="6" ry="9.500" transform="rotate(25 2780.500 287.500)"/><ellipse cx="2862" cy="313" rx="11" ry="12"/><ellipse cx="2908.500" cy="271" rx="4" ry="8.500" transform="rotate(-35 2908.500 271)"/><ellipse cx="2862" cy="396.500" rx="13" ry="5.500" transform="rotate(-17 2862 396.500)"/></g>
<path d="M2822 337.200 V234.100" stroke="#b9b9ee" stroke-width="1.600"/><path d="M2822 234.100 V250 M2822 294 V314" stroke="#2424aa" stroke-width="2.200"/>
<path d="M2822 337.200 L2763.500 386.100" stroke="#eeb4b4" stroke-width="1.600"/><path d="M2763.500 386.100 L2780.500 371.900" stroke="#b32020" stroke-width="2.200"/>
<path d="M2822 337.200 L2923.300 365.500" stroke="#a9d6a0" stroke-width="1.600"/><path d="M2923.300 365.500 L2911 362.100 M2872.500 351.300 L2852 345.600" stroke="#2f8a2a" stroke-width="2.200"/>
<g stroke="#222" stroke-width="1.800" stroke-linejoin="round"><polygon points="2934.500,440 2950.800,445 2950.800,465.500 2934,474 2917.800,466 2917.800,445.500" fill="#fff"/><polygon points="2917.800,445.500 2934,452.500 2934,474 2917.800,466" fill="#a2a2a2"/><polygon points="2934,452.500 2950.800,445 2950.800,465.500 2934,474" fill="#e2e2e2"/></g>
<polygon points="2968.400,453 2983.400,453 2975.900,461" fill="#222"/></svg>
<span class="tx" style="left:2814.0px;top:209.4px;font-size:23.0px;color:#4646c8;">Z</span>
<span class="tx" style="left:2745.7px;top:384.6px;font-size:23.0px;color:#cc5656;">X</span>
<span class="tx" style="left:2929.5px;top:360.2px;font-size:23.0px;color:#62a653;">Y</span>
<span class="tx" style="left:2790.500px;top:332px;font-size:21.500px;color:#111;transform-origin:0 0;transform:matrix(.95,.31,0,1,0,0)">Right</span>
<span class="tx" style="left:2881px;top:341px;font-size:18.500px;color:#111;transform-origin:0 0;transform:matrix(.64,-.68,0,1.05,0,0)">Back</span>
<span class="tx" style="left:2865.600px;top:268.300px;font-size:17.500px;color:#111;transform-origin:0 0;transform:matrix(-.681,.538,-1.097,-.358,0,0)">Top</span>
<svg class="abs" style="left:2820px;top:1530px" width="190" height="40" viewBox="2820 1530 190 40"><g fill="#fff" stroke="#333" stroke-width="2.200" stroke-linejoin="round"><path d="M2838.500 1551.500 V1546.500 A10.300 7 0 0 1 2859 1546.500 V1555 C2859 1559 2854 1561.500 2846 1561.500 H2828.800 V1551.500 Z"/><path d="M2838.500 1546.500 A10.300 7 0 0 0 2859 1546.500" fill="none"/><ellipse cx="2848.700" cy="1545.800" rx="5.500" ry="2.800"/><path d="M2828.800 1551.500 H2846 C2853 1551.500 2859 1549.500 2859 1546.500" fill="none"/><path d="M2833 1561 V1557.500 M2837 1561 V1558.500 M2841 1561 V1557.500 M2845 1561 V1558.500 M2849 1561 V1557.500 M2853 1560 V1557.500" stroke-width="1.200" fill="none"/></g>
<g fill="none" stroke="#333" stroke-width="2.200" stroke-linejoin="round"><path d="M2895.200 1562.500 V1558.500 A18.900 20 0 0 1 2933 1558.500 V1562.500 Z"/><path d="M2902 1556.500 A12.200 11.500 0 0 1 2926.200 1556.500 H2918.500 A4.400 4.400 0 0 0 2909.700 1556.500 Z"/><path d="M2914.100 1538.500 V1542.500 M2904.600 1541 L2906.600 1544.400 M2923.600 1541 L2921.600 1544.400 M2897.800 1548 L2901.200 1550 M2930.400 1548 L2927 1550 M2895.500 1556 H2898.800 M2932.700 1556 H2929.400 M2909 1539 L2910 1542.500 M2919.200 1539 L2918.200 1542.500 M2900.600 1544 L2903.200 1546.600 M2927.600 1544 L2925 1546.600" stroke-width="1.200"/></g>
<g fill="#333"><rect x="2982.800" y="1536" width="2.400" height="25"/><rect x="2974.800" y="1536" width="18.400" height="2.200"/><rect x="2970.200" y="1552.300" width="9.600" height="3.600"/><rect x="2988.200" y="1552.300" width="9.600" height="3.600"/><rect x="2970.200" y="1560" width="27.600" height="3.800"/></g><path d="M2975 1537.500 L2971.500 1552.500 M2975 1537.500 L2978.500 1552.500 M2993 1537.500 L2989.500 1552.500 M2993 1537.500 L2996.500 1552.500" stroke="#333" stroke-width="1.300" fill="none"/></svg>
<div id="bottom"></div>
<svg class="abs" style="left:80px;top:1579px" width="2943" height="60" viewBox="80 1579 2943 60"><path d="M113 1595.200 V1620.400 M100.400 1607.800 H125.600" stroke="#666" stroke-width="5.600" stroke-linecap="round"/>
<path d="M148 1579 H216 L233.700 1605.600 L216 1632.400 H148 Z" fill="#ebebeb" stroke="#cdcdcd" stroke-width="1"/>
<path d="M165.700 1604.500 L184 1585.300 L192 1593.600 V1587.200 H197.500 V1599.400 L202.200 1604.500 V1620.700 H188.400 V1608.600 H179.600 V1620.700 H165.700 Z" fill="#666"/>
<path d="M218.300 1579 H473.100 L490 1605.600 L473.100 1632.400 H218.300 L235.500 1605.600 Z" fill="#fff"/>
<path d="M494 1579 H893.400 V1626 Q893.400 1634.400 885 1634.400 H502.400 Q494 1634.400 494 1626 Z" fill="#2a4dab"/>
<path d="M494 1579 H893.400 V1623 Q893.400 1630.800 885.600 1630.800 H501.800 Q494 1630.800 494 1623 Z" fill="#fff"/>
<path d="M897.5 1579 H1297.7 V1624 Q1297.7 1632 1289.7 1632 H905.5 Q897.5 1632 897.5 1624 Z" fill="#ebebeb"/>
<path d="M1302.0 1579 H1702.0 V1624 Q1702.0 1632 1694.0 1632 H1310.0 Q1302.0 1632 1302.0 1624 Z" fill="#ebebeb"/>
<path d="M1706.4 1579 H2105.6 V1624 Q2105.6 1632 2097.6 1632 H1714.4 Q1706.4 1632 1706.4 1624 Z" fill="#ebebeb"/>
<g transform="translate(516.0 1587.7)" stroke="#333" stroke-width="2.200" stroke-linejoin="round"><polygon points="1,1 25.500,1 34.400,9.500 34.400,33.600 10,33.600 1,25" fill="#fff"/><polygon points="3,3 17.500,3 24.500,9.800 24.500,24.500 10.500,24.500 3,17.500" fill="#9a9a9a" stroke="#666" stroke-width="1.400"/><path d="M3 3 L10.500 9.800 H24.500 M10.500 9.800 V24.500" fill="none" stroke="#666" stroke-width="1.400"/><path d="M1 1 L10 9.500 H34.400 M10 9.500 V33.600" fill="none" stroke-width="1.800"/></g>
<g transform="translate(920.2 1587.7)" stroke="#444" stroke-width="2.200" stroke-linejoin="round"><polygon points="1,1 25.500,1 34.400,9.500 34.400,33.600 10,33.600 1,25" fill="#fff"/><polygon points="3,3 17.500,3 24.500,9.800 24.500,24.500 10.500,24.500 3,17.500" fill="#9a9a9a" stroke="#666" stroke-width="1.400"/><path d="M3 3 L10.500 9.800 H24.500 M10.500 9.800 V24.500" fill="none" stroke="#666" stroke-width="1.400"/><path d="M1 1 L10 9.500 H34.400 M10 9.500 V33.600" fill="none" stroke-width="1.800"/></g>
<g transform="translate(1326.3 1587.4)" stroke="#444" stroke-width="2" stroke-linejoin="round" fill="#fff"><polygon points="17,1 28,1 33,5.500 33,34 22,34 17,29.500"/><path d="M17 1 L22 5.500 H33 M22 5.500 V34" fill="none"/><polygon points="1,11.500 12,11.500 17,16 17,34 6,34 1,29.500"/><path d="M1 11.500 L6 16 H17 M6 16 V34" fill="none"/></g>
<g transform="translate(1730.7 1587.4)" stroke="#444" stroke-width="2" stroke-linejoin="round" fill="#fff"><polygon points="17,1 28,1 33,5.500 33,34 22,34 17,29.500"/><path d="M17 1 L22 5.500 H33 M22 5.500 V34" fill="none"/><polygon points="1,11.500 12,11.500 17,16 17,34 6,34 1,29.500"/><path d="M1 11.500 L6 16 H17 M6 16 V34" fill="none"/></g></svg>
<div class="abs" style="left:255px;top:1580px;width:200px;height:52px;overflow:hidden"><span class="tx" style="left:6px;top:11.6px;font-size:27px;color:#666;letter-spacing:0.35px">Exercise 3: Shooter</span><div class="abs" style="left:180px;top:0;width:20px;height:52px;background:linear-gradient(90deg,rgba(255,255,255,0),#fff)"></div></div>
<span class="tx" style="left:558.9px;top:1596.4px;font-size:27.0px;color:#333;letter-spacing:0.54px;">Exercise 3 Assembly</span>
<span class="tx" style="left:962.4px;top:1596.4px;font-size:27.0px;color:#666;letter-spacing:0.33px;">Exercise 3 Assembly (C)</span>
<span class="tx" style="left:1367.2px;top:1596.4px;font-size:27.0px;color:#666;letter-spacing:0.30px;">Exercise 3 Part Studio</span>
<span class="tx" style="left:1771.6px;top:1596.4px;font-size:27.0px;color:#666;letter-spacing:0.01px;">Exercise 3 Game piece</span>
</body>
</html>
